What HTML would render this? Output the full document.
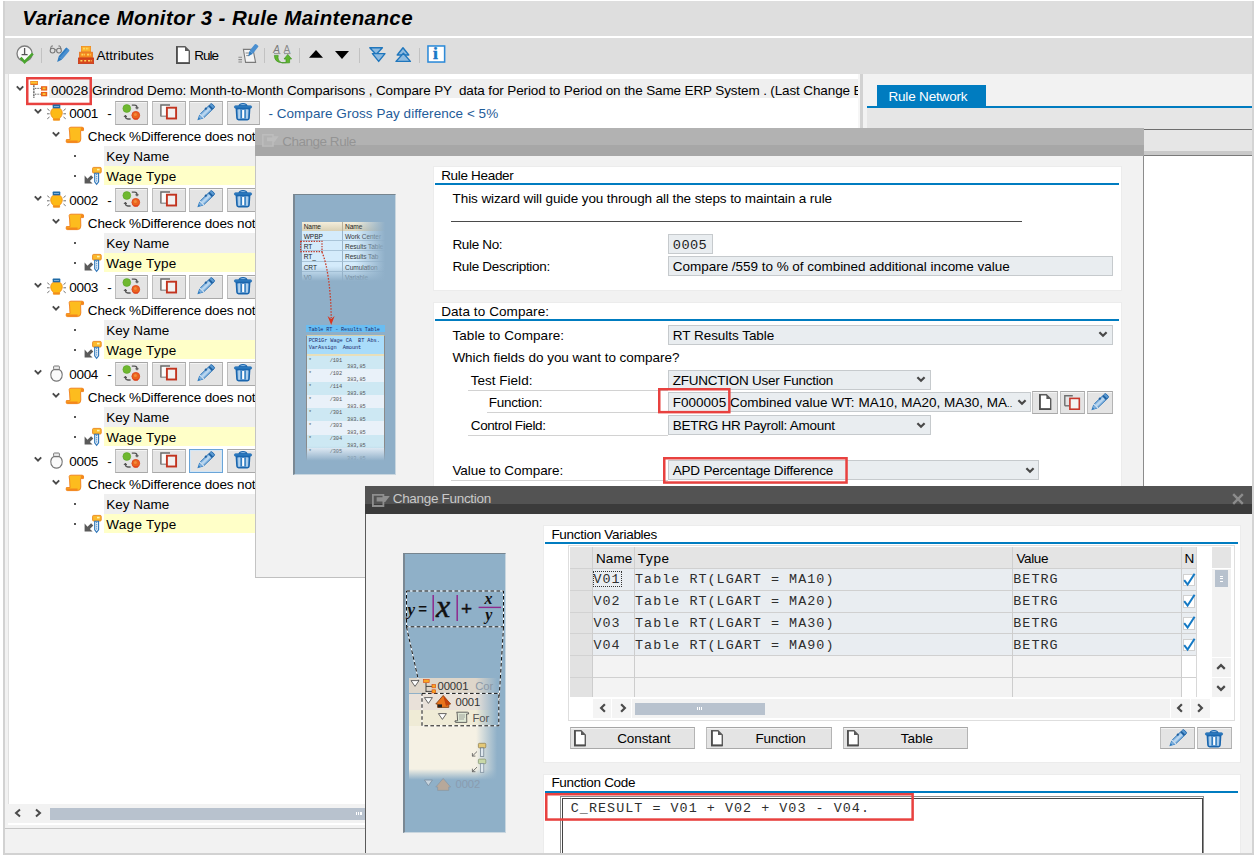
<!DOCTYPE html>
<html lang="en"><head><meta charset="utf-8"><title>Variance Monitor 3 - Rule Maintenance</title>
<style>
html,body{margin:0;padding:0;}
html{width:1256px;height:856px;overflow:hidden;}
body{width:1256px;height:856px;overflow:hidden;background:#fff;position:relative;font-family:"Liberation Sans",sans-serif;font-size:13.5px;letter-spacing:-0.09px;color:#000;}
.b{position:absolute;box-sizing:border-box;display:block;}
.t{position:absolute;white-space:pre;display:block;}
svg{overflow:visible}
</style></head>
<body>
<!-- window frame -->
<div class="b" style="left:2.5px;top:1.0px;width:1251.5px;height:854.0px;background:#f2f2f2;border:2px solid #d2d2d2;border-top:none;"></div>
<div class="b" style="left:4.5px;top:1.0px;width:1247.5px;height:34.5px;background:#dedede;"></div>
<span class="t" style="left:22.3px;top:3px;line-height:29px;font-size:20.5px;font-weight:bold;font-style:italic;letter-spacing:0.42px;">Variance Monitor 3 - Rule Maintenance</span>
<div class="b" style="left:4.5px;top:35.5px;width:1247.5px;height:2.3px;background:#fff;"></div>
<div class="b" style="left:4.5px;top:37.8px;width:1247.5px;height:36.6px;background:#dedede;"></div>
<!-- toolbar icons -->
<svg class="b" style="left:16.0px;top:45.0px;" width="18" height="19" viewBox="0 0 18 19"><circle cx="8.6" cy="8.6" r="7.6" fill="#fafafa" stroke="#7d7d7d" stroke-width="1.3"/><path d="M8.6 3 L8.6 9.6 M5.6 9.6 L11.6 9.6" stroke="#555" stroke-width="1.3" fill="none"/><path d="M4.6 12.6 L8.6 17 L16.8 8.6" fill="none" stroke="#4aa52e" stroke-width="2.6"/></svg>
<div class="b" style="left:41.0px;top:47.5px;width:1.2px;height:15.5px;background:#c2c2c2;"></div>
<svg class="b" style="left:49.0px;top:45.0px;" width="21" height="19" viewBox="0 0 21 19"><circle cx="3.6" cy="5.6" r="2.4" fill="none" stroke="#777" stroke-width="1.1"/><circle cx="10" cy="5.6" r="2.4" fill="none" stroke="#777" stroke-width="1.1"/><path d="M1.4 4 L2.4 1 L4 1 M12.2 4 L11 1 L9.4 1 M6 5 Q6.8 4 7.6 5" fill="none" stroke="#777" stroke-width="1"/><g transform="rotate(40 13 11)"><rect x="10.8" y="1.6" width="4.6" height="12" rx="1.2" fill="#4a8fd0"/><rect x="10.8" y="1.6" width="1.6" height="12" fill="#2f7cc0"/><path d="M10.8 13.6 L15.4 13.6 L13.1 18.6Z" fill="#2f7cc0"/></g></svg>
<svg class="b" style="left:78.0px;top:45.5px;" width="16" height="18" viewBox="0 0 16 18"><rect x="3.4" y="0.4" width="9.2" height="5.4" fill="#fbb02a" stroke="#f08c1c" stroke-width="0.8"/><rect x="1.6" y="6.2" width="12.8" height="5.4" fill="#f68a1e" stroke="#e8701a" stroke-width="0.8"/><rect x="0.4" y="12" width="15.2" height="5.6" fill="#d8481c" stroke="#c63a18" stroke-width="0.8"/><path d="M5 2.6 H11 M3.4 8.6 H7 M9 8.6 H12.6 M2.4 14.8 H4.6 M6.2 14.8 H8.4 M10 14.8 H13.6" stroke="#ffd65c" stroke-width="1.6" stroke-dasharray="2 0.8"/></svg>
<span class="t" style="left:96.6px;top:47px;line-height:17px;letter-spacing:0.008px;">Attributes</span>
<svg class="b" style="left:176.0px;top:45.5px;" width="14" height="18" viewBox="0 0 14 18"><path d="M0.7 0.7 L9 0.7 L13.3 5 L13.3 17.3 L0.7 17.3Z" fill="#fff" stroke="#5c5c5c" stroke-width="1.4"/><path d="M0.9 0.7 L0.9 17.1 L13.3 17.1" fill="none" stroke="#4e4e4e" stroke-width="1.8"/><path d="M9 0.7 L9 5 L13.3 5Z" fill="#5a5a5a"/></svg>
<span class="t" style="left:194.3px;top:47px;line-height:17px;letter-spacing:-1.022px;">Rule</span>
<svg class="b" style="left:238.0px;top:45.0px;" width="19" height="19" viewBox="0 0 19 19"><path d="M5.4 4.4 L15 4.4 L17.6 17.4 L7.6 17.4Z" fill="#f4f4f4" stroke="#7a7a7a" stroke-width="1.1"/><path d="M7.6 8 H12.4 M8.2 10.6 H11.4" stroke="#8a8a8a" stroke-width="1"/><path d="M0.4 12.2 H4 M0.4 14.6 H4 M0.4 17 H4" stroke="#8a8a8a" stroke-width="1.1"/><g transform="rotate(38 14 6)"><rect x="12" y="-2" width="4.4" height="9.6" rx="1.2" fill="#4a8fd0"/><path d="M12 7.6 L16.4 7.6 L14.2 12.4Z" fill="#2f7cc0"/></g></svg>
<div class="b" style="left:264.3px;top:47.5px;width:1.2px;height:15.5px;background:#c2c2c2;"></div>
<svg class="b" style="left:272.5px;top:45.0px;" width="19" height="19" viewBox="0 0 19 19"><text x="0.2" y="8" font-family="Liberation Sans,sans-serif" font-size="10" font-style="italic" fill="#7a7a7a">A</text><text x="10.4" y="8" font-family="Liberation Sans,sans-serif" font-size="10" fill="#8a8a8a">A</text><path d="M1 8.6 H7.4 M11 8.6 H17.6" stroke="#8a8a8a" stroke-width="0.9"/><path d="M1.4 10.4 Q1.6 17.6 9 17.6 L13 17.6 L13 14 L11 14 L14.8 9.4 L18.6 14 L16.6 14 L16.6 17.8 L9 18 Q4 15.6 5.2 10.4Z" fill="#5fb52c" stroke="#3f9422" stroke-width="0.7"/></svg>
<div class="b" style="left:298.8px;top:47.5px;width:1.2px;height:15.5px;background:#c2c2c2;"></div>
<svg class="b" style="left:309.0px;top:50.2px;" width="14" height="8" viewBox="0 0 14 8"><path d="M0 7.8 L7 0 L14 7.8Z" fill="#000"/></svg>
<svg class="b" style="left:334.8px;top:51.2px;" width="14" height="8" viewBox="0 0 14 8"><path d="M0 0 L14 0 L7 8Z" fill="#000"/></svg>
<div class="b" style="left:358.8px;top:47.5px;width:1.2px;height:15.5px;background:#c2c2c2;"></div>
<svg class="b" style="left:368.5px;top:46.6px;" width="17" height="15.4" viewBox="0 0 17 15.4"><path d="M0.8 0.8 L13.4 0.8 L7.1 7.4Z" fill="#8fbbe0" stroke="#1f76bc" stroke-width="1.4" stroke-linejoin="round"/><path d="M3.4 6.6 L16 6.6 L9.7 14.4Z" fill="#8fbbe0" stroke="#1f76bc" stroke-width="1.4" stroke-linejoin="round"/></svg>
<svg class="b" style="left:393.6px;top:46.6px;" width="17" height="15.4" viewBox="0 0 17 15.4"><path d="M3.2 8 L9 0.8 L14.8 8Z" fill="#8fbbe0" stroke="#1f76bc" stroke-width="1.4" stroke-linejoin="round"/><path d="M2 14.4 L9.4 6.2 L16.4 14.4Z" fill="#8fbbe0" stroke="#1f76bc" stroke-width="1.4" stroke-linejoin="round"/></svg>
<div class="b" style="left:418.9px;top:47.5px;width:1.2px;height:15.5px;background:#c2c2c2;"></div>
<svg class="b" style="left:427.0px;top:45.2px;" width="18.6" height="18" viewBox="0 0 18.6 18"><rect x="0.3" y="0.3" width="18" height="17.4" fill="#9ccaf0"/><rect x="1" y="1" width="16.6" height="16" fill="#fff" stroke="#2f8ad6" stroke-width="1.5"/></svg>
<span class="t" style="left:433.1px;top:43px;line-height:20px;font-family:'Liberation Serif',serif;font-size:17.5px;color:#1a78c8;font-weight:bold;-webkit-text-stroke:0.5px #1a78c8;">i</span>
<!-- tree panel -->
<div class="b" style="left:4.5px;top:74.4px;width:854.0px;height:754.0px;background:#f2f2f2;"></div>
<div class="b" style="left:8.0px;top:74.4px;width:850.4px;height:729.6px;background:#fff;border-left:1.6px solid #e0e0e0;"></div>
<div class="b" style="left:858.4px;top:74.4px;width:1.8px;height:754.0px;background:#f6f6f6;"></div>
<div class="b" style="left:860.2px;top:74.4px;width:2.6px;height:754.0px;background:#d2d2d2;"></div>
<svg class="b" style="left:17.6px;top:812.8px" width="1" height="1"><polyline points="2.0,-3.5 -2.0,0 2.0,3.5" fill="none" stroke="#4a4a4a" stroke-width="2" stroke-linejoin="miter"/></svg>
<svg class="b" style="left:38.2px;top:812.8px" width="1" height="1"><polyline points="-2.0,-3.5 2.0,0 -2.0,3.5" fill="none" stroke="#4a4a4a" stroke-width="2" stroke-linejoin="miter"/></svg>
<div class="b" style="left:49.5px;top:807.6px;width:809.0px;height:12.6px;background:#b8c2ce;"></div>
<div class="b" style="left:356.0px;top:812.4px;width:1.2px;height:3.0px;background:#fff;"></div><div class="b" style="left:358.2px;top:812.4px;width:1.2px;height:3.0px;background:#fff;"></div><div class="b" style="left:360.4px;top:812.4px;width:1.2px;height:3.0px;background:#fff;"></div>
<div class="b" style="left:8.0px;top:823.4px;width:850.4px;height:1.2px;background:#fff;"></div>
<div class="b" style="left:4.5px;top:828.0px;width:1247.5px;height:1.2px;background:#c6c6c6;"></div>
<div class="b" style="left:49.2px;top:78.5px;width:809.2px;height:19.2px;background:#efefef;"></div>
<svg class="b" style="left:19.8px;top:87.8px" width="1" height="1"><polyline points="-3.2,-1.65 0,1.65 3.2,-1.65" fill="none" stroke="#4a4a4a" stroke-width="1.9" stroke-linejoin="miter"/></svg>
<svg class="b" style="left:29.6px;top:80.5px;" width="18" height="17" viewBox="0 0 18 17"><rect x="0.3" y="0" width="7.6" height="4" fill="#e8701c"/><rect x="1" y="0.5" width="6.2" height="2.2" fill="#fbc531"/><line x1="3.9" y1="4.2" x2="3.9" y2="17" stroke="#222" stroke-width="1" stroke-dasharray="2.2 0.8"/><line x1="5" y1="7.4" x2="10.8" y2="7.4" stroke="#555" stroke-width="0.9" stroke-dasharray="1.4 1"/><line x1="5" y1="13.2" x2="10.8" y2="13.2" stroke="#555" stroke-width="0.9" stroke-dasharray="1.4 1"/><rect x="11" y="5.2" width="6.2" height="4.4" fill="#e8601c"/><rect x="12.6" y="6.4" width="3" height="1.9" fill="#fbc531"/><rect x="11" y="10.9" width="6.2" height="4.4" fill="#e8601c"/><rect x="12.6" y="12.1" width="3" height="1.9" fill="#fbc531"/></svg>
<span class="t" style="left:51.0px;top:82px;line-height:17px;letter-spacing:-0.085px;">00028</span>
<span class="t" style="left:92.0px;top:82px;line-height:17px;letter-spacing:-0.128px;">Grindrod Demo: Month-to-Month Comparisons , Compare PY  data for Period to Period on the Same ERP System . (Last Change</span>
<div class="b" style="left:853.0px;top:82.0px;width:5.4px;height:14.0px;overflow:hidden;"><span class="t" style="left:0.6px;top:0px;line-height:17px;">B</span></div>
<svg class="b" style="left:26.0px;top:77.4px;" width="66" height="28.2" viewBox="0 0 66 28.2"><rect x="1.25" y="1.25" width="63.5" height="25.7" fill="none" stroke="#e8413f" stroke-width="2.5"/></svg>
<!-- rule 0001 -->
<svg class="b" style="left:37.6px;top:111.2px" width="1" height="1"><polyline points="-3.2,-1.65 0,1.65 3.2,-1.65" fill="none" stroke="#4a4a4a" stroke-width="1.9" stroke-linejoin="miter"/></svg>
<svg class="b" style="left:47.1px;top:105.3px;" width="19" height="16" viewBox="0 0 19 16"><path d="M6.2 3.4 C3 5 2.8 10.4 6.4 13.2 L6.4 15.2 L12.6 15.2 L12.6 13.2 C16.2 10.4 16 5 12.8 3.4Z" fill="#fdba16" stroke="#f0901c" stroke-width="0.9"/><path d="M6.6 13.4 H12.4 V15 H6.6Z" fill="#f28c1a"/><rect x="5.7" y="-0.4" width="7.6" height="3.7" rx="0.6" fill="#1f6aa5"/><rect x="6.9" y="1" width="5.2" height="1" fill="#79acdb"/><g stroke="#6e6e6e" stroke-width="1"><line x1="0.3" y1="3.8" x2="2.5" y2="5.6"/><line x1="0" y1="8.8" x2="2.6" y2="8.8"/><line x1="0.3" y1="13.8" x2="2.5" y2="12"/><line x1="18.7" y1="3.8" x2="16.5" y2="5.6"/><line x1="19" y1="8.8" x2="16.4" y2="8.8"/><line x1="18.7" y1="13.8" x2="16.5" y2="12"/></g></svg>
<span class="t" style="left:69.3px;top:105px;line-height:17px;letter-spacing:-0.344px;">0001</span>
<span class="t" style="left:107.2px;top:105px;line-height:17px;">-</span>
<div class="b" style="left:115.1px;top:101.0px;width:33.4px;height:24.0px;background:#e4e4e4;border:1px solid;border-color:#a6a6a6 #b4b4b4 #a9a9a9 #bdbdbd;box-shadow:inset 0 1px 0 #f4f4f4;"></div>
<div class="b" style="left:152.3px;top:101.0px;width:33.4px;height:24.0px;background:#e4e4e4;border:1px solid;border-color:#a6a6a6 #b4b4b4 #a9a9a9 #bdbdbd;box-shadow:inset 0 1px 0 #f4f4f4;"></div>
<div class="b" style="left:189.3px;top:101.0px;width:33.4px;height:24.0px;background:#e4e4e4;border:1px solid;border-color:#a6a6a6 #b4b4b4 #a9a9a9 #bdbdbd;box-shadow:inset 0 1px 0 #f4f4f4;"></div>
<div class="b" style="left:226.7px;top:101.0px;width:33.4px;height:24.0px;background:#e4e4e4;border:1px solid;border-color:#a6a6a6 #b4b4b4 #a9a9a9 #bdbdbd;box-shadow:inset 0 1px 0 #f4f4f4;"></div>
<svg class="b" style="left:122.5px;top:104.1px;" width="18" height="17" viewBox="0 0 18 17"><circle cx="3.8" cy="4.5" r="3.9" fill="#6fb82f" stroke="#57a326" stroke-width="0.6"/><circle cx="12.8" cy="11.3" r="3.9" fill="#ea641e" stroke="#dc3f1c" stroke-width="0.8"/><circle cx="12.4" cy="10.6" r="1.5" fill="#f28a3a"/><path d="M10.6 14.4 H15 V15.6 H10.6Z" fill="#dc3f1c"/><path d="M8.8 1.2 L11.6 1.2 Q14 1.2 14 3.6 L14 5.2" fill="none" stroke="#555" stroke-width="1.3"/><path d="M12.4 3.8 H15.6" stroke="#555" stroke-width="1.1"/><path d="M7.6 15 L4.8 15 Q2.4 15 2.4 12.6 L2.4 11" fill="none" stroke="#555" stroke-width="1.3"/><path d="M0.8 12.4 H4" stroke="#555" stroke-width="1.1"/></svg>
<svg class="b" style="left:159.6px;top:104.2px;" width="18" height="17" viewBox="0 0 18 17"><rect x="0.9" y="1.2" width="9" height="11" fill="#fbfbfb"/><path d="M0.9 12.6 L0.9 1 L10 1" fill="none" stroke="#6a6a6a" stroke-width="1.4"/><path d="M0.9 12.2 L6 12.2" stroke="#8a8a8a" stroke-width="1.2"/><rect x="6.9" y="3.7" width="9.2" height="10.8" fill="#f1f1f1" stroke="#c2341f" stroke-width="1.9"/></svg>
<svg class="b" style="left:197.0px;top:103.6px;" width="17.0" height="17.0" viewBox="0 0 17 17"><g transform="rotate(46 8.5 8.5)"><path d="M5.9 -0.8 Q5.9 -2.2 7.1 -2.2 L9.9 -2.2 Q11.1 -2.2 11.1 -0.8 L11.1 0.6 L5.9 0.6Z" fill="#5b9ad2" stroke="#2368ab" stroke-width="0.9"/><rect x="5.6" y="0.6" width="5.8" height="1.5" fill="#1d5e9e"/><rect x="5.9" y="2.1" width="5.2" height="11.4" fill="#8dbae3" stroke="#2a72b5" stroke-width="0.9"/><rect x="7.4" y="2.4" width="2.2" height="10.8" fill="#b9d6ef"/><circle cx="5.9" cy="5.6" r="1.1" fill="#1d5e9e"/><rect x="5.6" y="13.2" width="5.8" height="1.1" fill="#e6f0fa"/><path d="M5.6 14.3 L11.4 14.3 L8.5 19.8Z" fill="#2f7cc0"/><path d="M6.6 14.6 L10.4 14.6 L9.6 16.6 L7.4 16.6Z" fill="#7fb0de"/></g></svg>
<svg class="b" style="left:233.8px;top:103.4px;" width="18" height="17" viewBox="0 0 18 17"><path d="M5 2.8 Q5.6 0.5 9 0.5 Q12.4 0.5 13 2.8Z" fill="#8dbae3" stroke="#1a66ae" stroke-width="1.1"/><rect x="0.4" y="2.7" width="17.2" height="2.5" rx="1" fill="#2f7cc0" stroke="#1a66ae" stroke-width="0.6"/><path d="M2.4 5.6 L15.6 5.6 L15 15.2 Q14.9 16.6 13.4 16.6 L4.6 16.6 Q3.1 16.6 3 15.2Z" fill="#86b5e0" stroke="#1a66ae" stroke-width="1.6"/><rect x="4.4" y="6.4" width="1.5" height="9.2" fill="#b9d6ef"/><rect x="12.2" y="6.4" width="1.5" height="9.2" fill="#b9d6ef"/><rect x="6.6" y="7" width="1.6" height="8.4" fill="#2f7cc0"/><rect x="10.2" y="7" width="1.6" height="8.4" fill="#2f7cc0"/><rect x="8.2" y="7" width="2" height="8" fill="#fff"/></svg>
<span class="t" style="left:268.4px;top:105px;line-height:17px;color:#1f5c99;letter-spacing:0.046px;">- Compare Gross Pay difference &lt; 5%</span>
<svg class="b" style="left:55.8px;top:134.4px" width="1" height="1"><polyline points="-3.2,-1.65 0,1.65 3.2,-1.65" fill="none" stroke="#4a4a4a" stroke-width="1.9" stroke-linejoin="miter"/></svg>
<svg class="b" style="left:66.2px;top:127.2px;" width="18" height="16" viewBox="0 0 18 16"><path d="M3.2 1.4 Q3.2 0.2 5 0.2 L16 0.2 Q17.8 0.2 17.6 2 L17.4 3.6 L14.6 3.6 L14.8 12 Q14.9 15.6 11.4 15.6 L1.4 15.6 Q0 15.6 0.2 14.2 L0.4 12.6 L4 12.6 L3.6 5 Q3.2 2.6 3.2 1.4Z" fill="#fdbc1e" stroke="#ef7d1a" stroke-width="0.9"/><path d="M0.4 13.4 L11.6 13.4 L11.6 15.4 L1.4 15.4 Q0.2 15.4 0.4 13.4Z" fill="#f4871c"/><path d="M14.8 0.6 Q17.4 0.4 17.2 2.2 L17 3.3 L14.9 3.3Z" fill="#f4871c"/></svg>
<span class="t" style="left:87.8px;top:128px;line-height:17px;letter-spacing:-0.122px;">Check %Difference does not</span>
<div class="b" style="left:73.8px;top:155.2px;width:2.0px;height:2.0px;background:#555;"></div>
<div class="b" style="left:104.0px;top:146.1px;width:754.4px;height:20.0px;background:#efefef;"></div>
<span class="t" style="left:106.2px;top:148px;line-height:17px;letter-spacing:-0.004px;">Key Name</span>
<div class="b" style="left:73.8px;top:174.9px;width:2.0px;height:2.0px;background:#555;"></div>
<div class="b" style="left:104.0px;top:166.1px;width:754.4px;height:19.3px;background:#ffffc8;"></div>
<svg class="b" style="left:83.6px;top:166.6px;" width="18" height="18" viewBox="0 0 18 18"><path d="M0.6 8.6 L0.6 16.6 L8.6 16.6 L5.9 13.9 L9.3 10.5 L7.1 8.3 L3.5 11.7Z" fill="#5a5a5a"/><rect x="8.6" y="0.4" width="8.6" height="5.6" rx="1" fill="#fbb92c" stroke="#e8861c" stroke-width="0.9"/><rect x="13" y="1.8" width="2.6" height="1.6" fill="#fff3b0"/><path d="M10.7 6.2 L14.6 6.2 L14.6 14.8 L12.6 17.4 L10.7 14.8Z" fill="#eaf3fb" stroke="#2c74b8" stroke-width="1.1"/><line x1="12.7" y1="7" x2="12.7" y2="15" stroke="#2c74b8" stroke-width="0.9" stroke-dasharray="1.2 0.9"/></svg>
<span class="t" style="left:106.2px;top:168px;line-height:17px;letter-spacing:0.320px;">Wage Type</span>
<!-- rule 0002 -->
<svg class="b" style="left:37.6px;top:198.2px" width="1" height="1"><polyline points="-3.2,-1.65 0,1.65 3.2,-1.65" fill="none" stroke="#4a4a4a" stroke-width="1.9" stroke-linejoin="miter"/></svg>
<svg class="b" style="left:47.1px;top:192.3px;" width="19" height="16" viewBox="0 0 19 16"><path d="M6.2 3.4 C3 5 2.8 10.4 6.4 13.2 L6.4 15.2 L12.6 15.2 L12.6 13.2 C16.2 10.4 16 5 12.8 3.4Z" fill="#fdba16" stroke="#f0901c" stroke-width="0.9"/><path d="M6.6 13.4 H12.4 V15 H6.6Z" fill="#f28c1a"/><rect x="5.7" y="-0.4" width="7.6" height="3.7" rx="0.6" fill="#1f6aa5"/><rect x="6.9" y="1" width="5.2" height="1" fill="#79acdb"/><g stroke="#6e6e6e" stroke-width="1"><line x1="0.3" y1="3.8" x2="2.5" y2="5.6"/><line x1="0" y1="8.8" x2="2.6" y2="8.8"/><line x1="0.3" y1="13.8" x2="2.5" y2="12"/><line x1="18.7" y1="3.8" x2="16.5" y2="5.6"/><line x1="19" y1="8.8" x2="16.4" y2="8.8"/><line x1="18.7" y1="13.8" x2="16.5" y2="12"/></g></svg>
<span class="t" style="left:69.3px;top:192px;line-height:17px;letter-spacing:-0.344px;">0002</span>
<span class="t" style="left:107.2px;top:192px;line-height:17px;">-</span>
<div class="b" style="left:115.1px;top:188.0px;width:33.4px;height:24.0px;background:#e4e4e4;border:1px solid;border-color:#a6a6a6 #b4b4b4 #a9a9a9 #bdbdbd;box-shadow:inset 0 1px 0 #f4f4f4;"></div>
<div class="b" style="left:152.3px;top:188.0px;width:33.4px;height:24.0px;background:#e4e4e4;border:1px solid;border-color:#a6a6a6 #b4b4b4 #a9a9a9 #bdbdbd;box-shadow:inset 0 1px 0 #f4f4f4;"></div>
<div class="b" style="left:189.3px;top:188.0px;width:33.4px;height:24.0px;background:#e4e4e4;border:1px solid;border-color:#a6a6a6 #b4b4b4 #a9a9a9 #bdbdbd;box-shadow:inset 0 1px 0 #f4f4f4;"></div>
<div class="b" style="left:226.7px;top:188.0px;width:33.4px;height:24.0px;background:#e4e4e4;border:1px solid;border-color:#a6a6a6 #b4b4b4 #a9a9a9 #bdbdbd;box-shadow:inset 0 1px 0 #f4f4f4;"></div>
<svg class="b" style="left:122.5px;top:191.1px;" width="18" height="17" viewBox="0 0 18 17"><circle cx="3.8" cy="4.5" r="3.9" fill="#6fb82f" stroke="#57a326" stroke-width="0.6"/><circle cx="12.8" cy="11.3" r="3.9" fill="#ea641e" stroke="#dc3f1c" stroke-width="0.8"/><circle cx="12.4" cy="10.6" r="1.5" fill="#f28a3a"/><path d="M10.6 14.4 H15 V15.6 H10.6Z" fill="#dc3f1c"/><path d="M8.8 1.2 L11.6 1.2 Q14 1.2 14 3.6 L14 5.2" fill="none" stroke="#555" stroke-width="1.3"/><path d="M12.4 3.8 H15.6" stroke="#555" stroke-width="1.1"/><path d="M7.6 15 L4.8 15 Q2.4 15 2.4 12.6 L2.4 11" fill="none" stroke="#555" stroke-width="1.3"/><path d="M0.8 12.4 H4" stroke="#555" stroke-width="1.1"/></svg>
<svg class="b" style="left:159.6px;top:191.2px;" width="18" height="17" viewBox="0 0 18 17"><rect x="0.9" y="1.2" width="9" height="11" fill="#fbfbfb"/><path d="M0.9 12.6 L0.9 1 L10 1" fill="none" stroke="#6a6a6a" stroke-width="1.4"/><path d="M0.9 12.2 L6 12.2" stroke="#8a8a8a" stroke-width="1.2"/><rect x="6.9" y="3.7" width="9.2" height="10.8" fill="#f1f1f1" stroke="#c2341f" stroke-width="1.9"/></svg>
<svg class="b" style="left:197.0px;top:190.6px;" width="17.0" height="17.0" viewBox="0 0 17 17"><g transform="rotate(46 8.5 8.5)"><path d="M5.9 -0.8 Q5.9 -2.2 7.1 -2.2 L9.9 -2.2 Q11.1 -2.2 11.1 -0.8 L11.1 0.6 L5.9 0.6Z" fill="#5b9ad2" stroke="#2368ab" stroke-width="0.9"/><rect x="5.6" y="0.6" width="5.8" height="1.5" fill="#1d5e9e"/><rect x="5.9" y="2.1" width="5.2" height="11.4" fill="#8dbae3" stroke="#2a72b5" stroke-width="0.9"/><rect x="7.4" y="2.4" width="2.2" height="10.8" fill="#b9d6ef"/><circle cx="5.9" cy="5.6" r="1.1" fill="#1d5e9e"/><rect x="5.6" y="13.2" width="5.8" height="1.1" fill="#e6f0fa"/><path d="M5.6 14.3 L11.4 14.3 L8.5 19.8Z" fill="#2f7cc0"/><path d="M6.6 14.6 L10.4 14.6 L9.6 16.6 L7.4 16.6Z" fill="#7fb0de"/></g></svg>
<svg class="b" style="left:233.8px;top:190.4px;" width="18" height="17" viewBox="0 0 18 17"><path d="M5 2.8 Q5.6 0.5 9 0.5 Q12.4 0.5 13 2.8Z" fill="#8dbae3" stroke="#1a66ae" stroke-width="1.1"/><rect x="0.4" y="2.7" width="17.2" height="2.5" rx="1" fill="#2f7cc0" stroke="#1a66ae" stroke-width="0.6"/><path d="M2.4 5.6 L15.6 5.6 L15 15.2 Q14.9 16.6 13.4 16.6 L4.6 16.6 Q3.1 16.6 3 15.2Z" fill="#86b5e0" stroke="#1a66ae" stroke-width="1.6"/><rect x="4.4" y="6.4" width="1.5" height="9.2" fill="#b9d6ef"/><rect x="12.2" y="6.4" width="1.5" height="9.2" fill="#b9d6ef"/><rect x="6.6" y="7" width="1.6" height="8.4" fill="#2f7cc0"/><rect x="10.2" y="7" width="1.6" height="8.4" fill="#2f7cc0"/><rect x="8.2" y="7" width="2" height="8" fill="#fff"/></svg>
<svg class="b" style="left:55.8px;top:221.4px" width="1" height="1"><polyline points="-3.2,-1.65 0,1.65 3.2,-1.65" fill="none" stroke="#4a4a4a" stroke-width="1.9" stroke-linejoin="miter"/></svg>
<svg class="b" style="left:66.2px;top:214.2px;" width="18" height="16" viewBox="0 0 18 16"><path d="M3.2 1.4 Q3.2 0.2 5 0.2 L16 0.2 Q17.8 0.2 17.6 2 L17.4 3.6 L14.6 3.6 L14.8 12 Q14.9 15.6 11.4 15.6 L1.4 15.6 Q0 15.6 0.2 14.2 L0.4 12.6 L4 12.6 L3.6 5 Q3.2 2.6 3.2 1.4Z" fill="#fdbc1e" stroke="#ef7d1a" stroke-width="0.9"/><path d="M0.4 13.4 L11.6 13.4 L11.6 15.4 L1.4 15.4 Q0.2 15.4 0.4 13.4Z" fill="#f4871c"/><path d="M14.8 0.6 Q17.4 0.4 17.2 2.2 L17 3.3 L14.9 3.3Z" fill="#f4871c"/></svg>
<span class="t" style="left:87.8px;top:215px;line-height:17px;letter-spacing:-0.122px;">Check %Difference does not</span>
<div class="b" style="left:73.8px;top:242.2px;width:2.0px;height:2.0px;background:#555;"></div>
<div class="b" style="left:104.0px;top:233.1px;width:754.4px;height:20.0px;background:#efefef;"></div>
<span class="t" style="left:106.2px;top:235px;line-height:17px;letter-spacing:-0.004px;">Key Name</span>
<div class="b" style="left:73.8px;top:261.9px;width:2.0px;height:2.0px;background:#555;"></div>
<div class="b" style="left:104.0px;top:253.1px;width:754.4px;height:19.3px;background:#ffffc8;"></div>
<svg class="b" style="left:83.6px;top:253.6px;" width="18" height="18" viewBox="0 0 18 18"><path d="M0.6 8.6 L0.6 16.6 L8.6 16.6 L5.9 13.9 L9.3 10.5 L7.1 8.3 L3.5 11.7Z" fill="#5a5a5a"/><rect x="8.6" y="0.4" width="8.6" height="5.6" rx="1" fill="#fbb92c" stroke="#e8861c" stroke-width="0.9"/><rect x="13" y="1.8" width="2.6" height="1.6" fill="#fff3b0"/><path d="M10.7 6.2 L14.6 6.2 L14.6 14.8 L12.6 17.4 L10.7 14.8Z" fill="#eaf3fb" stroke="#2c74b8" stroke-width="1.1"/><line x1="12.7" y1="7" x2="12.7" y2="15" stroke="#2c74b8" stroke-width="0.9" stroke-dasharray="1.2 0.9"/></svg>
<span class="t" style="left:106.2px;top:255px;line-height:17px;letter-spacing:0.320px;">Wage Type</span>
<!-- rule 0003 -->
<svg class="b" style="left:37.6px;top:285.2px" width="1" height="1"><polyline points="-3.2,-1.65 0,1.65 3.2,-1.65" fill="none" stroke="#4a4a4a" stroke-width="1.9" stroke-linejoin="miter"/></svg>
<svg class="b" style="left:47.1px;top:279.3px;" width="19" height="16" viewBox="0 0 19 16"><path d="M6.2 3.4 C3 5 2.8 10.4 6.4 13.2 L6.4 15.2 L12.6 15.2 L12.6 13.2 C16.2 10.4 16 5 12.8 3.4Z" fill="#fdba16" stroke="#f0901c" stroke-width="0.9"/><path d="M6.6 13.4 H12.4 V15 H6.6Z" fill="#f28c1a"/><rect x="5.7" y="-0.4" width="7.6" height="3.7" rx="0.6" fill="#1f6aa5"/><rect x="6.9" y="1" width="5.2" height="1" fill="#79acdb"/><g stroke="#6e6e6e" stroke-width="1"><line x1="0.3" y1="3.8" x2="2.5" y2="5.6"/><line x1="0" y1="8.8" x2="2.6" y2="8.8"/><line x1="0.3" y1="13.8" x2="2.5" y2="12"/><line x1="18.7" y1="3.8" x2="16.5" y2="5.6"/><line x1="19" y1="8.8" x2="16.4" y2="8.8"/><line x1="18.7" y1="13.8" x2="16.5" y2="12"/></g></svg>
<span class="t" style="left:69.3px;top:279px;line-height:17px;letter-spacing:-0.344px;">0003</span>
<span class="t" style="left:107.2px;top:279px;line-height:17px;">-</span>
<div class="b" style="left:115.1px;top:275.0px;width:33.4px;height:24.0px;background:#e4e4e4;border:1px solid;border-color:#a6a6a6 #b4b4b4 #a9a9a9 #bdbdbd;box-shadow:inset 0 1px 0 #f4f4f4;"></div>
<div class="b" style="left:152.3px;top:275.0px;width:33.4px;height:24.0px;background:#e4e4e4;border:1px solid;border-color:#a6a6a6 #b4b4b4 #a9a9a9 #bdbdbd;box-shadow:inset 0 1px 0 #f4f4f4;"></div>
<div class="b" style="left:189.3px;top:275.0px;width:33.4px;height:24.0px;background:#e4e4e4;border:1px solid;border-color:#a6a6a6 #b4b4b4 #a9a9a9 #bdbdbd;box-shadow:inset 0 1px 0 #f4f4f4;"></div>
<div class="b" style="left:226.7px;top:275.0px;width:33.4px;height:24.0px;background:#e4e4e4;border:1px solid;border-color:#a6a6a6 #b4b4b4 #a9a9a9 #bdbdbd;box-shadow:inset 0 1px 0 #f4f4f4;"></div>
<svg class="b" style="left:122.5px;top:278.1px;" width="18" height="17" viewBox="0 0 18 17"><circle cx="3.8" cy="4.5" r="3.9" fill="#6fb82f" stroke="#57a326" stroke-width="0.6"/><circle cx="12.8" cy="11.3" r="3.9" fill="#ea641e" stroke="#dc3f1c" stroke-width="0.8"/><circle cx="12.4" cy="10.6" r="1.5" fill="#f28a3a"/><path d="M10.6 14.4 H15 V15.6 H10.6Z" fill="#dc3f1c"/><path d="M8.8 1.2 L11.6 1.2 Q14 1.2 14 3.6 L14 5.2" fill="none" stroke="#555" stroke-width="1.3"/><path d="M12.4 3.8 H15.6" stroke="#555" stroke-width="1.1"/><path d="M7.6 15 L4.8 15 Q2.4 15 2.4 12.6 L2.4 11" fill="none" stroke="#555" stroke-width="1.3"/><path d="M0.8 12.4 H4" stroke="#555" stroke-width="1.1"/></svg>
<svg class="b" style="left:159.6px;top:278.2px;" width="18" height="17" viewBox="0 0 18 17"><rect x="0.9" y="1.2" width="9" height="11" fill="#fbfbfb"/><path d="M0.9 12.6 L0.9 1 L10 1" fill="none" stroke="#6a6a6a" stroke-width="1.4"/><path d="M0.9 12.2 L6 12.2" stroke="#8a8a8a" stroke-width="1.2"/><rect x="6.9" y="3.7" width="9.2" height="10.8" fill="#f1f1f1" stroke="#c2341f" stroke-width="1.9"/></svg>
<svg class="b" style="left:197.0px;top:277.6px;" width="17.0" height="17.0" viewBox="0 0 17 17"><g transform="rotate(46 8.5 8.5)"><path d="M5.9 -0.8 Q5.9 -2.2 7.1 -2.2 L9.9 -2.2 Q11.1 -2.2 11.1 -0.8 L11.1 0.6 L5.9 0.6Z" fill="#5b9ad2" stroke="#2368ab" stroke-width="0.9"/><rect x="5.6" y="0.6" width="5.8" height="1.5" fill="#1d5e9e"/><rect x="5.9" y="2.1" width="5.2" height="11.4" fill="#8dbae3" stroke="#2a72b5" stroke-width="0.9"/><rect x="7.4" y="2.4" width="2.2" height="10.8" fill="#b9d6ef"/><circle cx="5.9" cy="5.6" r="1.1" fill="#1d5e9e"/><rect x="5.6" y="13.2" width="5.8" height="1.1" fill="#e6f0fa"/><path d="M5.6 14.3 L11.4 14.3 L8.5 19.8Z" fill="#2f7cc0"/><path d="M6.6 14.6 L10.4 14.6 L9.6 16.6 L7.4 16.6Z" fill="#7fb0de"/></g></svg>
<svg class="b" style="left:233.8px;top:277.4px;" width="18" height="17" viewBox="0 0 18 17"><path d="M5 2.8 Q5.6 0.5 9 0.5 Q12.4 0.5 13 2.8Z" fill="#8dbae3" stroke="#1a66ae" stroke-width="1.1"/><rect x="0.4" y="2.7" width="17.2" height="2.5" rx="1" fill="#2f7cc0" stroke="#1a66ae" stroke-width="0.6"/><path d="M2.4 5.6 L15.6 5.6 L15 15.2 Q14.9 16.6 13.4 16.6 L4.6 16.6 Q3.1 16.6 3 15.2Z" fill="#86b5e0" stroke="#1a66ae" stroke-width="1.6"/><rect x="4.4" y="6.4" width="1.5" height="9.2" fill="#b9d6ef"/><rect x="12.2" y="6.4" width="1.5" height="9.2" fill="#b9d6ef"/><rect x="6.6" y="7" width="1.6" height="8.4" fill="#2f7cc0"/><rect x="10.2" y="7" width="1.6" height="8.4" fill="#2f7cc0"/><rect x="8.2" y="7" width="2" height="8" fill="#fff"/></svg>
<svg class="b" style="left:55.8px;top:308.4px" width="1" height="1"><polyline points="-3.2,-1.65 0,1.65 3.2,-1.65" fill="none" stroke="#4a4a4a" stroke-width="1.9" stroke-linejoin="miter"/></svg>
<svg class="b" style="left:66.2px;top:301.2px;" width="18" height="16" viewBox="0 0 18 16"><path d="M3.2 1.4 Q3.2 0.2 5 0.2 L16 0.2 Q17.8 0.2 17.6 2 L17.4 3.6 L14.6 3.6 L14.8 12 Q14.9 15.6 11.4 15.6 L1.4 15.6 Q0 15.6 0.2 14.2 L0.4 12.6 L4 12.6 L3.6 5 Q3.2 2.6 3.2 1.4Z" fill="#fdbc1e" stroke="#ef7d1a" stroke-width="0.9"/><path d="M0.4 13.4 L11.6 13.4 L11.6 15.4 L1.4 15.4 Q0.2 15.4 0.4 13.4Z" fill="#f4871c"/><path d="M14.8 0.6 Q17.4 0.4 17.2 2.2 L17 3.3 L14.9 3.3Z" fill="#f4871c"/></svg>
<span class="t" style="left:87.8px;top:302px;line-height:17px;letter-spacing:-0.122px;">Check %Difference does not</span>
<div class="b" style="left:73.8px;top:329.2px;width:2.0px;height:2.0px;background:#555;"></div>
<div class="b" style="left:104.0px;top:320.1px;width:754.4px;height:20.0px;background:#efefef;"></div>
<span class="t" style="left:106.2px;top:322px;line-height:17px;letter-spacing:-0.004px;">Key Name</span>
<div class="b" style="left:73.8px;top:348.9px;width:2.0px;height:2.0px;background:#555;"></div>
<div class="b" style="left:104.0px;top:340.1px;width:754.4px;height:19.3px;background:#ffffc8;"></div>
<svg class="b" style="left:83.6px;top:340.6px;" width="18" height="18" viewBox="0 0 18 18"><path d="M0.6 8.6 L0.6 16.6 L8.6 16.6 L5.9 13.9 L9.3 10.5 L7.1 8.3 L3.5 11.7Z" fill="#5a5a5a"/><rect x="8.6" y="0.4" width="8.6" height="5.6" rx="1" fill="#fbb92c" stroke="#e8861c" stroke-width="0.9"/><rect x="13" y="1.8" width="2.6" height="1.6" fill="#fff3b0"/><path d="M10.7 6.2 L14.6 6.2 L14.6 14.8 L12.6 17.4 L10.7 14.8Z" fill="#eaf3fb" stroke="#2c74b8" stroke-width="1.1"/><line x1="12.7" y1="7" x2="12.7" y2="15" stroke="#2c74b8" stroke-width="0.9" stroke-dasharray="1.2 0.9"/></svg>
<span class="t" style="left:106.2px;top:342px;line-height:17px;letter-spacing:0.320px;">Wage Type</span>
<!-- rule 0004 -->
<svg class="b" style="left:37.6px;top:372.2px" width="1" height="1"><polyline points="-3.2,-1.65 0,1.65 3.2,-1.65" fill="none" stroke="#4a4a4a" stroke-width="1.9" stroke-linejoin="miter"/></svg>
<svg class="b" style="left:47.1px;top:366.3px;" width="19" height="16" viewBox="0 0 19 16"><rect x="6.6" y="0" width="5.8" height="3.4" rx="0.8" fill="#ececec" stroke="#777" stroke-width="1"/><path d="M6.8 3.6 C3 5.4 2.8 11.4 6 14 Q9.5 16.2 13 14 C16.2 11.4 16 5.4 12.2 3.6Z" fill="#fafafa" stroke="#777" stroke-width="1.1"/></svg>
<span class="t" style="left:69.3px;top:366px;line-height:17px;letter-spacing:-0.344px;">0004</span>
<span class="t" style="left:107.2px;top:366px;line-height:17px;">-</span>
<div class="b" style="left:115.1px;top:362.0px;width:33.4px;height:24.0px;background:#e4e4e4;border:1px solid;border-color:#a6a6a6 #b4b4b4 #a9a9a9 #bdbdbd;box-shadow:inset 0 1px 0 #f4f4f4;"></div>
<div class="b" style="left:152.3px;top:362.0px;width:33.4px;height:24.0px;background:#e4e4e4;border:1px solid;border-color:#a6a6a6 #b4b4b4 #a9a9a9 #bdbdbd;box-shadow:inset 0 1px 0 #f4f4f4;"></div>
<div class="b" style="left:189.3px;top:362.0px;width:33.4px;height:24.0px;background:#e4e4e4;border:1px solid;border-color:#a6a6a6 #b4b4b4 #a9a9a9 #bdbdbd;box-shadow:inset 0 1px 0 #f4f4f4;"></div>
<div class="b" style="left:226.7px;top:362.0px;width:33.4px;height:24.0px;background:#e4e4e4;border:1px solid;border-color:#a6a6a6 #b4b4b4 #a9a9a9 #bdbdbd;box-shadow:inset 0 1px 0 #f4f4f4;"></div>
<svg class="b" style="left:122.5px;top:365.1px;" width="18" height="17" viewBox="0 0 18 17"><circle cx="3.8" cy="4.5" r="3.9" fill="#6fb82f" stroke="#57a326" stroke-width="0.6"/><circle cx="12.8" cy="11.3" r="3.9" fill="#ea641e" stroke="#dc3f1c" stroke-width="0.8"/><circle cx="12.4" cy="10.6" r="1.5" fill="#f28a3a"/><path d="M10.6 14.4 H15 V15.6 H10.6Z" fill="#dc3f1c"/><path d="M8.8 1.2 L11.6 1.2 Q14 1.2 14 3.6 L14 5.2" fill="none" stroke="#555" stroke-width="1.3"/><path d="M12.4 3.8 H15.6" stroke="#555" stroke-width="1.1"/><path d="M7.6 15 L4.8 15 Q2.4 15 2.4 12.6 L2.4 11" fill="none" stroke="#555" stroke-width="1.3"/><path d="M0.8 12.4 H4" stroke="#555" stroke-width="1.1"/></svg>
<svg class="b" style="left:159.6px;top:365.2px;" width="18" height="17" viewBox="0 0 18 17"><rect x="0.9" y="1.2" width="9" height="11" fill="#fbfbfb"/><path d="M0.9 12.6 L0.9 1 L10 1" fill="none" stroke="#6a6a6a" stroke-width="1.4"/><path d="M0.9 12.2 L6 12.2" stroke="#8a8a8a" stroke-width="1.2"/><rect x="6.9" y="3.7" width="9.2" height="10.8" fill="#f1f1f1" stroke="#c2341f" stroke-width="1.9"/></svg>
<svg class="b" style="left:197.0px;top:364.6px;" width="17.0" height="17.0" viewBox="0 0 17 17"><g transform="rotate(46 8.5 8.5)"><path d="M5.9 -0.8 Q5.9 -2.2 7.1 -2.2 L9.9 -2.2 Q11.1 -2.2 11.1 -0.8 L11.1 0.6 L5.9 0.6Z" fill="#5b9ad2" stroke="#2368ab" stroke-width="0.9"/><rect x="5.6" y="0.6" width="5.8" height="1.5" fill="#1d5e9e"/><rect x="5.9" y="2.1" width="5.2" height="11.4" fill="#8dbae3" stroke="#2a72b5" stroke-width="0.9"/><rect x="7.4" y="2.4" width="2.2" height="10.8" fill="#b9d6ef"/><circle cx="5.9" cy="5.6" r="1.1" fill="#1d5e9e"/><rect x="5.6" y="13.2" width="5.8" height="1.1" fill="#e6f0fa"/><path d="M5.6 14.3 L11.4 14.3 L8.5 19.8Z" fill="#2f7cc0"/><path d="M6.6 14.6 L10.4 14.6 L9.6 16.6 L7.4 16.6Z" fill="#7fb0de"/></g></svg>
<svg class="b" style="left:233.8px;top:364.4px;" width="18" height="17" viewBox="0 0 18 17"><path d="M5 2.8 Q5.6 0.5 9 0.5 Q12.4 0.5 13 2.8Z" fill="#8dbae3" stroke="#1a66ae" stroke-width="1.1"/><rect x="0.4" y="2.7" width="17.2" height="2.5" rx="1" fill="#2f7cc0" stroke="#1a66ae" stroke-width="0.6"/><path d="M2.4 5.6 L15.6 5.6 L15 15.2 Q14.9 16.6 13.4 16.6 L4.6 16.6 Q3.1 16.6 3 15.2Z" fill="#86b5e0" stroke="#1a66ae" stroke-width="1.6"/><rect x="4.4" y="6.4" width="1.5" height="9.2" fill="#b9d6ef"/><rect x="12.2" y="6.4" width="1.5" height="9.2" fill="#b9d6ef"/><rect x="6.6" y="7" width="1.6" height="8.4" fill="#2f7cc0"/><rect x="10.2" y="7" width="1.6" height="8.4" fill="#2f7cc0"/><rect x="8.2" y="7" width="2" height="8" fill="#fff"/></svg>
<svg class="b" style="left:55.8px;top:395.4px" width="1" height="1"><polyline points="-3.2,-1.65 0,1.65 3.2,-1.65" fill="none" stroke="#4a4a4a" stroke-width="1.9" stroke-linejoin="miter"/></svg>
<svg class="b" style="left:66.2px;top:388.2px;" width="18" height="16" viewBox="0 0 18 16"><path d="M3.2 1.4 Q3.2 0.2 5 0.2 L16 0.2 Q17.8 0.2 17.6 2 L17.4 3.6 L14.6 3.6 L14.8 12 Q14.9 15.6 11.4 15.6 L1.4 15.6 Q0 15.6 0.2 14.2 L0.4 12.6 L4 12.6 L3.6 5 Q3.2 2.6 3.2 1.4Z" fill="#fdbc1e" stroke="#ef7d1a" stroke-width="0.9"/><path d="M0.4 13.4 L11.6 13.4 L11.6 15.4 L1.4 15.4 Q0.2 15.4 0.4 13.4Z" fill="#f4871c"/><path d="M14.8 0.6 Q17.4 0.4 17.2 2.2 L17 3.3 L14.9 3.3Z" fill="#f4871c"/></svg>
<span class="t" style="left:87.8px;top:389px;line-height:17px;letter-spacing:-0.122px;">Check %Difference does not</span>
<div class="b" style="left:73.8px;top:416.2px;width:2.0px;height:2.0px;background:#555;"></div>
<div class="b" style="left:104.0px;top:407.1px;width:754.4px;height:20.0px;background:#efefef;"></div>
<span class="t" style="left:106.2px;top:409px;line-height:17px;letter-spacing:-0.004px;">Key Name</span>
<div class="b" style="left:73.8px;top:435.9px;width:2.0px;height:2.0px;background:#555;"></div>
<div class="b" style="left:104.0px;top:427.1px;width:754.4px;height:19.3px;background:#ffffc8;"></div>
<svg class="b" style="left:83.6px;top:427.6px;" width="18" height="18" viewBox="0 0 18 18"><path d="M0.6 8.6 L0.6 16.6 L8.6 16.6 L5.9 13.9 L9.3 10.5 L7.1 8.3 L3.5 11.7Z" fill="#5a5a5a"/><rect x="8.6" y="0.4" width="8.6" height="5.6" rx="1" fill="#fbb92c" stroke="#e8861c" stroke-width="0.9"/><rect x="13" y="1.8" width="2.6" height="1.6" fill="#fff3b0"/><path d="M10.7 6.2 L14.6 6.2 L14.6 14.8 L12.6 17.4 L10.7 14.8Z" fill="#eaf3fb" stroke="#2c74b8" stroke-width="1.1"/><line x1="12.7" y1="7" x2="12.7" y2="15" stroke="#2c74b8" stroke-width="0.9" stroke-dasharray="1.2 0.9"/></svg>
<span class="t" style="left:106.2px;top:429px;line-height:17px;letter-spacing:0.320px;">Wage Type</span>
<!-- rule 0005 -->
<svg class="b" style="left:37.6px;top:459.2px" width="1" height="1"><polyline points="-3.2,-1.65 0,1.65 3.2,-1.65" fill="none" stroke="#4a4a4a" stroke-width="1.9" stroke-linejoin="miter"/></svg>
<svg class="b" style="left:47.1px;top:453.3px;" width="19" height="16" viewBox="0 0 19 16"><rect x="6.6" y="0" width="5.8" height="3.4" rx="0.8" fill="#ececec" stroke="#777" stroke-width="1"/><path d="M6.8 3.6 C3 5.4 2.8 11.4 6 14 Q9.5 16.2 13 14 C16.2 11.4 16 5.4 12.2 3.6Z" fill="#fafafa" stroke="#777" stroke-width="1.1"/></svg>
<span class="t" style="left:69.3px;top:453px;line-height:17px;letter-spacing:-0.344px;">0005</span>
<span class="t" style="left:107.2px;top:453px;line-height:17px;">-</span>
<div class="b" style="left:115.1px;top:449.0px;width:33.4px;height:24.0px;background:#e4e4e4;border:1px solid;border-color:#a6a6a6 #b4b4b4 #a9a9a9 #bdbdbd;box-shadow:inset 0 1px 0 #f4f4f4;"></div>
<div class="b" style="left:152.3px;top:449.0px;width:33.4px;height:24.0px;background:#e4e4e4;border:1px solid;border-color:#a6a6a6 #b4b4b4 #a9a9a9 #bdbdbd;box-shadow:inset 0 1px 0 #f4f4f4;"></div>
<div class="b" style="left:189.3px;top:449.0px;width:33.4px;height:24.0px;background:#e4e4e4;border:1px solid #6aa5d8;box-shadow:inset 0 0 0 1px #d3e6f6;"></div>
<div class="b" style="left:226.7px;top:449.0px;width:33.4px;height:24.0px;background:#e4e4e4;border:1px solid;border-color:#a6a6a6 #b4b4b4 #a9a9a9 #bdbdbd;box-shadow:inset 0 1px 0 #f4f4f4;"></div>
<svg class="b" style="left:122.5px;top:452.1px;" width="18" height="17" viewBox="0 0 18 17"><circle cx="3.8" cy="4.5" r="3.9" fill="#6fb82f" stroke="#57a326" stroke-width="0.6"/><circle cx="12.8" cy="11.3" r="3.9" fill="#ea641e" stroke="#dc3f1c" stroke-width="0.8"/><circle cx="12.4" cy="10.6" r="1.5" fill="#f28a3a"/><path d="M10.6 14.4 H15 V15.6 H10.6Z" fill="#dc3f1c"/><path d="M8.8 1.2 L11.6 1.2 Q14 1.2 14 3.6 L14 5.2" fill="none" stroke="#555" stroke-width="1.3"/><path d="M12.4 3.8 H15.6" stroke="#555" stroke-width="1.1"/><path d="M7.6 15 L4.8 15 Q2.4 15 2.4 12.6 L2.4 11" fill="none" stroke="#555" stroke-width="1.3"/><path d="M0.8 12.4 H4" stroke="#555" stroke-width="1.1"/></svg>
<svg class="b" style="left:159.6px;top:452.2px;" width="18" height="17" viewBox="0 0 18 17"><rect x="0.9" y="1.2" width="9" height="11" fill="#fbfbfb"/><path d="M0.9 12.6 L0.9 1 L10 1" fill="none" stroke="#6a6a6a" stroke-width="1.4"/><path d="M0.9 12.2 L6 12.2" stroke="#8a8a8a" stroke-width="1.2"/><rect x="6.9" y="3.7" width="9.2" height="10.8" fill="#f1f1f1" stroke="#c2341f" stroke-width="1.9"/></svg>
<svg class="b" style="left:197.0px;top:451.6px;" width="17.0" height="17.0" viewBox="0 0 17 17"><g transform="rotate(46 8.5 8.5)"><path d="M5.9 -0.8 Q5.9 -2.2 7.1 -2.2 L9.9 -2.2 Q11.1 -2.2 11.1 -0.8 L11.1 0.6 L5.9 0.6Z" fill="#5b9ad2" stroke="#2368ab" stroke-width="0.9"/><rect x="5.6" y="0.6" width="5.8" height="1.5" fill="#1d5e9e"/><rect x="5.9" y="2.1" width="5.2" height="11.4" fill="#8dbae3" stroke="#2a72b5" stroke-width="0.9"/><rect x="7.4" y="2.4" width="2.2" height="10.8" fill="#b9d6ef"/><circle cx="5.9" cy="5.6" r="1.1" fill="#1d5e9e"/><rect x="5.6" y="13.2" width="5.8" height="1.1" fill="#e6f0fa"/><path d="M5.6 14.3 L11.4 14.3 L8.5 19.8Z" fill="#2f7cc0"/><path d="M6.6 14.6 L10.4 14.6 L9.6 16.6 L7.4 16.6Z" fill="#7fb0de"/></g></svg>
<svg class="b" style="left:233.8px;top:451.4px;" width="18" height="17" viewBox="0 0 18 17"><path d="M5 2.8 Q5.6 0.5 9 0.5 Q12.4 0.5 13 2.8Z" fill="#8dbae3" stroke="#1a66ae" stroke-width="1.1"/><rect x="0.4" y="2.7" width="17.2" height="2.5" rx="1" fill="#2f7cc0" stroke="#1a66ae" stroke-width="0.6"/><path d="M2.4 5.6 L15.6 5.6 L15 15.2 Q14.9 16.6 13.4 16.6 L4.6 16.6 Q3.1 16.6 3 15.2Z" fill="#86b5e0" stroke="#1a66ae" stroke-width="1.6"/><rect x="4.4" y="6.4" width="1.5" height="9.2" fill="#b9d6ef"/><rect x="12.2" y="6.4" width="1.5" height="9.2" fill="#b9d6ef"/><rect x="6.6" y="7" width="1.6" height="8.4" fill="#2f7cc0"/><rect x="10.2" y="7" width="1.6" height="8.4" fill="#2f7cc0"/><rect x="8.2" y="7" width="2" height="8" fill="#fff"/></svg>
<svg class="b" style="left:55.8px;top:482.4px" width="1" height="1"><polyline points="-3.2,-1.65 0,1.65 3.2,-1.65" fill="none" stroke="#4a4a4a" stroke-width="1.9" stroke-linejoin="miter"/></svg>
<svg class="b" style="left:66.2px;top:475.2px;" width="18" height="16" viewBox="0 0 18 16"><path d="M3.2 1.4 Q3.2 0.2 5 0.2 L16 0.2 Q17.8 0.2 17.6 2 L17.4 3.6 L14.6 3.6 L14.8 12 Q14.9 15.6 11.4 15.6 L1.4 15.6 Q0 15.6 0.2 14.2 L0.4 12.6 L4 12.6 L3.6 5 Q3.2 2.6 3.2 1.4Z" fill="#fdbc1e" stroke="#ef7d1a" stroke-width="0.9"/><path d="M0.4 13.4 L11.6 13.4 L11.6 15.4 L1.4 15.4 Q0.2 15.4 0.4 13.4Z" fill="#f4871c"/><path d="M14.8 0.6 Q17.4 0.4 17.2 2.2 L17 3.3 L14.9 3.3Z" fill="#f4871c"/></svg>
<span class="t" style="left:87.8px;top:476px;line-height:17px;letter-spacing:-0.122px;">Check %Difference does not</span>
<div class="b" style="left:73.8px;top:503.2px;width:2.0px;height:2.0px;background:#555;"></div>
<div class="b" style="left:104.0px;top:494.1px;width:754.4px;height:20.0px;background:#efefef;"></div>
<span class="t" style="left:106.2px;top:496px;line-height:17px;letter-spacing:-0.004px;">Key Name</span>
<div class="b" style="left:73.8px;top:522.9px;width:2.0px;height:2.0px;background:#555;"></div>
<div class="b" style="left:104.0px;top:514.1px;width:754.4px;height:19.3px;background:#ffffc8;"></div>
<svg class="b" style="left:83.6px;top:514.6px;" width="18" height="18" viewBox="0 0 18 18"><path d="M0.6 8.6 L0.6 16.6 L8.6 16.6 L5.9 13.9 L9.3 10.5 L7.1 8.3 L3.5 11.7Z" fill="#5a5a5a"/><rect x="8.6" y="0.4" width="8.6" height="5.6" rx="1" fill="#fbb92c" stroke="#e8861c" stroke-width="0.9"/><rect x="13" y="1.8" width="2.6" height="1.6" fill="#fff3b0"/><path d="M10.7 6.2 L14.6 6.2 L14.6 14.8 L12.6 17.4 L10.7 14.8Z" fill="#eaf3fb" stroke="#2c74b8" stroke-width="1.1"/><line x1="12.7" y1="7" x2="12.7" y2="15" stroke="#2c74b8" stroke-width="0.9" stroke-dasharray="1.2 0.9"/></svg>
<span class="t" style="left:106.2px;top:516px;line-height:17px;letter-spacing:0.320px;">Wage Type</span>
<!-- right panel : Rule Network -->
<div class="b" style="left:862.8px;top:74.4px;width:389.4px;height:754.0px;background:#f2f2f2;"></div>
<div class="b" style="left:866.6px;top:108.4px;width:385.6px;height:43.0px;background:#e6e6e6;"></div>
<div class="b" style="left:866.6px;top:105.8px;width:385.6px;height:2.7px;background:#007cc0;"></div>
<div class="b" style="left:876.5px;top:85.1px;width:109.6px;height:21.5px;background:#007cc0;"></div>
<span class="t" style="left:888.4px;top:88px;line-height:17px;color:#fff;letter-spacing:-0.166px;">Rule Network</span>
<div class="b" style="left:866.6px;top:129.0px;width:385.6px;height:1.2px;background:#6e6e6e;"></div>
<div class="b" style="left:866.6px;top:151.0px;width:385.6px;height:4.0px;background:#c9c9c9;"></div>
<div class="b" style="left:866.6px;top:155.0px;width:385.6px;height:1.3px;background:#7a7a7a;"></div>
<div class="b" style="left:866.6px;top:156.3px;width:385.6px;height:672.0px;background:#fff;"></div>
<!-- dialog: Change Rule -->
<div class="b" style="left:255.3px;top:128.2px;width:888.9px;height:449.6px;background:#f2f2f2;border-left:1px solid #c4c4c4;border-bottom:1.2px solid #c0c0c0;border-right:1.2px solid #8c8c8c;"></div>
<div class="b" style="left:255.3px;top:128.2px;width:888.5px;height:16.4px;background:#b2b2b2;"></div>
<div class="b" style="left:255.3px;top:144.6px;width:888.5px;height:11.2px;background:#a7a7a7;"></div>
<svg class="b" style="left:261.5px;top:134.4px;" width="16" height="13" viewBox="0 0 16 13"><path d="M0.8 0.8 H11 V3 H15.2 L12.2 7 H11 V12 H0.8Z" fill="none" stroke="#bdbdbd" stroke-width="1.5"/><path d="M5 3.4 H15 L12 7.2 H5Z" fill="#bdbdbd"/></svg>
<span class="t" style="left:282.2px;top:133px;line-height:17px;color:#949494;letter-spacing:-0.481px;">Change Rule</span>
<!-- wizard picture 1 -->
<div class="b" style="left:293.1px;top:194.3px;width:103.1px;height:280.8px;background:#8fafc8;border-left:2px solid #7a8893;border-top:1px solid #77858f;border-right:1px solid #c9d6df;border-bottom:1px solid #c9d6df;overflow:hidden;"><div class="b" style="left:0;top:-1.2px;width:103px;height:282px"><div class="b" style="left:7.2px;top:27.5px;width:40.8px;height:9.0px;background:linear-gradient(#f4eedc,#d9d0b4);border-right:1px solid #b8b09a;"></div><div class="b" style="left:48.0px;top:27.5px;width:42.0px;height:9.0px;background:linear-gradient(#f4eedc,#d9d0b4);"></div><div class="b" style="left:7.2px;top:36.5px;width:40.8px;height:10.3px;background:#d4ebfb;border-bottom:1px solid #a9c4d8;border-right:1px solid #9ab4c8;"></div><div class="b" style="left:48.0px;top:36.5px;width:42.0px;height:10.3px;background:#d4ebfb;border-bottom:1px solid #a9c4d8;"></div><span class="t" style="left:8.6px;top:38px;line-height:9px;font-size:6.6px;color:#222;">WPBP</span><span class="t" style="left:50.0px;top:38px;line-height:9px;font-size:6.6px;color:#333;">Work Center</span><div class="b" style="left:7.2px;top:46.9px;width:40.8px;height:10.3px;background:#d4ebfb;border-bottom:1px solid #a9c4d8;border-right:1px solid #9ab4c8;"></div><div class="b" style="left:48.0px;top:46.9px;width:42.0px;height:10.3px;background:#d4ebfb;border-bottom:1px solid #a9c4d8;"></div><span class="t" style="left:8.6px;top:48px;line-height:9px;font-size:6.6px;color:#222;">RT</span><span class="t" style="left:50.0px;top:48px;line-height:9px;font-size:6.6px;color:#333;">Results Table</span><div class="b" style="left:7.2px;top:57.2px;width:40.8px;height:10.3px;background:#d4ebfb;border-bottom:1px solid #a9c4d8;border-right:1px solid #9ab4c8;"></div><div class="b" style="left:48.0px;top:57.2px;width:42.0px;height:10.3px;background:#d4ebfb;border-bottom:1px solid #a9c4d8;"></div><span class="t" style="left:8.6px;top:58px;line-height:9px;font-size:6.6px;color:#222;">RT_</span><span class="t" style="left:50.0px;top:58px;line-height:9px;font-size:6.6px;color:#333;">Results Tab</span><div class="b" style="left:7.2px;top:67.5px;width:40.8px;height:10.3px;background:#d4ebfb;border-bottom:1px solid #a9c4d8;border-right:1px solid #9ab4c8;"></div><div class="b" style="left:48.0px;top:67.5px;width:42.0px;height:10.3px;background:#d4ebfb;border-bottom:1px solid #a9c4d8;"></div><span class="t" style="left:8.6px;top:69px;line-height:9px;font-size:6.6px;color:#222;">CRT</span><span class="t" style="left:50.0px;top:69px;line-height:9px;font-size:6.6px;color:#333;">Cumulation</span><div class="b" style="left:7.2px;top:77.9px;width:40.8px;height:10.3px;background:#d4ebfb;border-bottom:1px solid #a9c4d8;border-right:1px solid #9ab4c8;"></div><div class="b" style="left:48.0px;top:77.9px;width:42.0px;height:10.3px;background:#d4ebfb;border-bottom:1px solid #a9c4d8;"></div><span class="t" style="left:8.6px;top:79px;line-height:9px;font-size:6.6px;color:#222;">V0</span><span class="t" style="left:50.0px;top:79px;line-height:9px;font-size:6.6px;color:#333;">Variable</span><span class="t" style="left:8.6px;top:28px;line-height:9px;font-size:6.6px;color:#222;">Name</span><span class="t" style="left:50.0px;top:28px;line-height:9px;font-size:6.6px;color:#222;">Name</span><div class="b" style="left:60.0px;top:26.0px;width:43.0px;height:66.0px;background:linear-gradient(90deg,rgba(143,175,200,0),rgba(143,175,200,1) 70%);"></div><div class="b" style="left:6.0px;top:72.0px;width:97.0px;height:20.0px;background:linear-gradient(180deg,rgba(143,175,200,0),rgba(143,175,200,1) 75%);"></div><svg class="b" style="left:0.0px;top:0.0px;" width="103" height="280" viewBox="0 0 103 280"><rect x="5.6" y="47.3" width="21.4" height="10.4" fill="none" stroke="#c0392b" stroke-width="1.2" stroke-dasharray="1.4 1.2"/><path d="M27 58 C33 72 36 100 36.2 124" fill="none" stroke="#c8402f" stroke-width="1.3" stroke-dasharray="1.6 1.4"/><path d="M32.6 122 L36.2 131 L39.6 122 L36.2 125Z" fill="#d8351f"/></svg><div class="b" style="left:11.0px;top:131.2px;width:78.6px;height:6.6px;background:#69bdf2;"></div><span class="t" style="left:13.4px;top:132px;line-height:8px;font-family:'Liberation Mono',monospace;font-size:5.1px;color:#1a2a6a;">Table RT - Results Table</span><div class="b" style="left:11.0px;top:140.6px;width:78.6px;height:126.0px;background:#cfe8f6;border:1px solid #8a8a8a;border-top:1.6px solid #d8cfa8;"></div><div class="b" style="left:12.0px;top:142.2px;width:76.6px;height:18.0px;background:#a9dcfa;"></div><div class="b" style="left:12.0px;top:160.2px;width:76.6px;height:1.4px;background:#e8dfba;"></div><span class="t" style="left:13.6px;top:143px;line-height:8px;font-family:'Liberation Mono',monospace;font-size:5.3px;color:#1a2a6a;">PCR1Gr Wage CA  BT Abs.</span><span class="t" style="left:13.6px;top:150px;line-height:8px;font-family:'Liberation Mono',monospace;font-size:5.3px;color:#1a2a6a;">VarAssign  Amount</span><div class="b" style="left:12.0px;top:162.0px;width:76.6px;height:13.1px;background:#cde8f3;"></div><span class="t" style="left:13.4px;top:163px;line-height:8px;font-family:'Liberation Mono',monospace;font-size:5.3px;color:#555;">*</span><span class="t" style="left:34.6px;top:163px;line-height:8px;font-family:'Liberation Mono',monospace;font-size:5.3px;color:#555;">/101</span><span class="t" style="left:52.0px;top:169px;line-height:8px;font-family:'Liberation Mono',monospace;font-size:5.3px;color:#555;">383,85</span><div class="b" style="left:12.0px;top:175.1px;width:76.6px;height:13.1px;background:#e9f1f9;"></div><span class="t" style="left:13.4px;top:176px;line-height:8px;font-family:'Liberation Mono',monospace;font-size:5.3px;color:#555;">*</span><span class="t" style="left:34.6px;top:176px;line-height:8px;font-family:'Liberation Mono',monospace;font-size:5.3px;color:#555;">/102</span><span class="t" style="left:52.0px;top:182px;line-height:8px;font-family:'Liberation Mono',monospace;font-size:5.3px;color:#555;">383,85</span><div class="b" style="left:12.0px;top:188.1px;width:76.6px;height:13.1px;background:#cde8f3;"></div><span class="t" style="left:13.4px;top:189px;line-height:8px;font-family:'Liberation Mono',monospace;font-size:5.3px;color:#555;">*</span><span class="t" style="left:34.6px;top:189px;line-height:8px;font-family:'Liberation Mono',monospace;font-size:5.3px;color:#555;">/114</span><span class="t" style="left:52.0px;top:196px;line-height:8px;font-family:'Liberation Mono',monospace;font-size:5.3px;color:#555;">383,85</span><div class="b" style="left:12.0px;top:201.2px;width:76.6px;height:13.1px;background:#e9f1f9;"></div><span class="t" style="left:13.4px;top:202px;line-height:8px;font-family:'Liberation Mono',monospace;font-size:5.3px;color:#555;">*</span><span class="t" style="left:34.6px;top:202px;line-height:8px;font-family:'Liberation Mono',monospace;font-size:5.3px;color:#555;">/301</span><span class="t" style="left:52.0px;top:209px;line-height:8px;font-family:'Liberation Mono',monospace;font-size:5.3px;color:#555;">383,85</span><div class="b" style="left:12.0px;top:214.3px;width:76.6px;height:13.1px;background:#cde8f3;"></div><span class="t" style="left:13.4px;top:215px;line-height:8px;font-family:'Liberation Mono',monospace;font-size:5.3px;color:#555;">*</span><span class="t" style="left:34.6px;top:215px;line-height:8px;font-family:'Liberation Mono',monospace;font-size:5.3px;color:#555;">/301</span><span class="t" style="left:52.0px;top:222px;line-height:8px;font-family:'Liberation Mono',monospace;font-size:5.3px;color:#555;">383,85</span><div class="b" style="left:12.0px;top:227.3px;width:76.6px;height:13.1px;background:#e9f1f9;"></div><span class="t" style="left:13.4px;top:228px;line-height:8px;font-family:'Liberation Mono',monospace;font-size:5.3px;color:#555;">*</span><span class="t" style="left:34.6px;top:228px;line-height:8px;font-family:'Liberation Mono',monospace;font-size:5.3px;color:#555;">/303</span><span class="t" style="left:52.0px;top:235px;line-height:8px;font-family:'Liberation Mono',monospace;font-size:5.3px;color:#555;">383,85</span><div class="b" style="left:12.0px;top:240.4px;width:76.6px;height:13.1px;background:#cde8f3;"></div><span class="t" style="left:13.4px;top:241px;line-height:8px;font-family:'Liberation Mono',monospace;font-size:5.3px;color:#555;">*</span><span class="t" style="left:34.6px;top:241px;line-height:8px;font-family:'Liberation Mono',monospace;font-size:5.3px;color:#555;">/304</span><span class="t" style="left:52.0px;top:248px;line-height:8px;font-family:'Liberation Mono',monospace;font-size:5.3px;color:#555;">383,85</span><div class="b" style="left:12.0px;top:253.5px;width:76.6px;height:13.1px;background:#e9f1f9;"></div><span class="t" style="left:13.4px;top:254px;line-height:8px;font-family:'Liberation Mono',monospace;font-size:5.3px;color:#555;">*</span><span class="t" style="left:34.6px;top:254px;line-height:8px;font-family:'Liberation Mono',monospace;font-size:5.3px;color:#555;">/305</span><span class="t" style="left:52.0px;top:261px;line-height:8px;font-family:'Liberation Mono',monospace;font-size:5.3px;color:#555;">383,85</span><div class="b" style="left:10.0px;top:252.0px;width:81.0px;height:16.0px;background:linear-gradient(180deg,rgba(143,175,200,0),rgba(143,175,200,1) 92%);"></div></div></div>
<div class="b" style="left:432.6px;top:165.8px;width:689.8px;height:125.6px;background:#fff;border:1px solid #ececec;"></div>
<span class="t" style="left:441.2px;top:167px;line-height:17px;letter-spacing:-0.320px;">Rule Header</span>
<div class="b" style="left:435.2px;top:183.4px;width:684.2px;height:2.0px;background:#007cc0;"></div>
<span class="t" style="left:452.6px;top:190px;line-height:17px;letter-spacing:-0.094px;">This wizard will guide you through all the steps to maintain a rule</span>
<div class="b" style="left:451.4px;top:220.8px;width:570.2px;height:1.1px;background:#4a4a4a;"></div>
<span class="t" style="left:452.4px;top:236px;line-height:17px;letter-spacing:-0.332px;">Rule No:</span>
<div class="b" style="left:668.4px;top:233.5px;width:44.2px;height:20.0px;background:#e9edf0;border:1px solid #c6cacd;"></div>
<span class="t" style="left:672.8px;top:237px;line-height:17px;font-family:'Liberation Mono',monospace;font-size:13.6px;color:#222;letter-spacing:0.45px;">0005</span>
<span class="t" style="left:452.4px;top:258px;line-height:17px;letter-spacing:-0.312px;">Rule Description:</span>
<div class="b" style="left:668.4px;top:256.3px;width:444.2px;height:20.0px;background:#e9edf0;border:1px solid #c6cacd;"></div>
<span class="t" style="left:672.8px;top:258px;line-height:17px;letter-spacing:-0.030px;">Compare /559 to % of combined additional income value</span>
<div class="b" style="left:432.6px;top:301.8px;width:689.8px;height:200.0px;background:#fff;border:1px solid #ececec;"></div>
<span class="t" style="left:441.2px;top:303px;line-height:17px;letter-spacing:0.083px;">Data to Compare:</span>
<div class="b" style="left:435.2px;top:319.4px;width:684.2px;height:2.0px;background:#007cc0;"></div>
<span class="t" style="left:452.4px;top:327px;line-height:17px;letter-spacing:0.087px;">Table to Compare:</span>
<div class="b" style="left:668.4px;top:324.6px;width:444.2px;height:20.0px;background:#e9edf0;border:1px solid #c6cacd;"></div>
<span class="t" style="left:672.8px;top:327px;line-height:17px;letter-spacing:-0.037px;">RT Results Table</span>
<svg class="b" style="left:1103.2px;top:334.4px" width="1" height="1"><polyline points="-3.6,-1.8 0,1.8 3.6,-1.8" fill="none" stroke="#484848" stroke-width="2.2" stroke-linejoin="miter"/></svg>
<span class="t" style="left:452.4px;top:349px;line-height:17px;letter-spacing:-0.032px;">Which fields do you want to compare?</span>
<span class="t" style="left:470.8px;top:372px;line-height:17px;letter-spacing:0.008px;">Test Field:</span>
<div class="b" style="left:468.3px;top:390.0px;width:200.1px;height:1.0px;background:#d2d2d2;"></div>
<div class="b" style="left:668.4px;top:369.6px;width:262.2px;height:20.0px;background:#e9edf0;border:1px solid #c6cacd;"></div>
<span class="t" style="left:672.8px;top:372px;line-height:17px;letter-spacing:-0.244px;">ZFUNCTION User Function</span>
<svg class="b" style="left:921.2px;top:379.4px" width="1" height="1"><polyline points="-3.6,-1.8 0,1.8 3.6,-1.8" fill="none" stroke="#484848" stroke-width="2.2" stroke-linejoin="miter"/></svg>
<span class="t" style="left:488.8px;top:394px;line-height:17px;letter-spacing:-0.241px;">Function:</span>
<div class="b" style="left:486.9px;top:412.0px;width:181.5px;height:1.0px;background:#d2d2d2;"></div>
<div class="b" style="left:668.4px;top:392.3px;width:362.6px;height:20.0px;background:#e9edf0;border:1px solid #c6cacd;"></div>
<span class="t" style="left:672.8px;top:394px;line-height:17px;letter-spacing:0.009px;">F000005 Combined value WT: MA10, MA20, MA30, MA</span>
<svg class="b" style="left:1021.6px;top:402.1px" width="1" height="1"><polyline points="-3.6,-1.8 0,1.8 3.6,-1.8" fill="none" stroke="#484848" stroke-width="2.2" stroke-linejoin="miter"/></svg>
<span class="t" style="left:1007.0px;top:398px;line-height:12px;font-size:9px;letter-spacing:0.3px;">..</span>
<span class="t" style="left:470.8px;top:417px;line-height:17px;letter-spacing:-0.399px;">Control Field:</span>
<div class="b" style="left:468.3px;top:435.0px;width:200.1px;height:1.0px;background:#d2d2d2;"></div>
<div class="b" style="left:668.4px;top:415.3px;width:262.2px;height:20.0px;background:#e9edf0;border:1px solid #c6cacd;"></div>
<span class="t" style="left:672.8px;top:417px;line-height:17px;letter-spacing:-0.259px;">BETRG HR Payroll: Amount</span>
<svg class="b" style="left:921.2px;top:425.1px" width="1" height="1"><polyline points="-3.6,-1.8 0,1.8 3.6,-1.8" fill="none" stroke="#484848" stroke-width="2.2" stroke-linejoin="miter"/></svg>
<span class="t" style="left:452.4px;top:462px;line-height:17px;letter-spacing:-0.041px;">Value to Compare:</span>
<div class="b" style="left:450.5px;top:480.0px;width:217.9px;height:1.0px;background:#d2d2d2;"></div>
<div class="b" style="left:668.4px;top:460.4px;width:370.9px;height:20.0px;background:#e9edf0;border:1px solid #c6cacd;"></div>
<span class="t" style="left:672.8px;top:462px;line-height:17px;letter-spacing:-0.217px;">APD Percentage Difference</span>
<svg class="b" style="left:1029.9px;top:470.2px" width="1" height="1"><polyline points="-3.6,-1.8 0,1.8 3.6,-1.8" fill="none" stroke="#484848" stroke-width="2.2" stroke-linejoin="miter"/></svg>
<div class="b" style="left:1032.3px;top:391.2px;width:25.8px;height:22.8px;background:#e4e4e4;border:1px solid;border-color:#a6a6a6 #b4b4b4 #a9a9a9 #bdbdbd;box-shadow:inset 0 1px 0 #f4f4f4;"></div>
<div class="b" style="left:1059.5px;top:391.2px;width:25.8px;height:22.8px;background:#e4e4e4;border:1px solid;border-color:#a6a6a6 #b4b4b4 #a9a9a9 #bdbdbd;box-shadow:inset 0 1px 0 #f4f4f4;"></div>
<div class="b" style="left:1086.8px;top:391.2px;width:25.8px;height:22.8px;background:#e4e4e4;border:1px solid;border-color:#a6a6a6 #b4b4b4 #a9a9a9 #bdbdbd;box-shadow:inset 0 1px 0 #f4f4f4;"></div>
<svg class="b" style="left:1039.0px;top:394.2px;" width="12.4" height="16" viewBox="0 0 12.4 16"><path d="M0.7 0.7 L7.4 0.7 L11.700000000000001 5 L11.700000000000001 15.3 L0.7 15.3Z" fill="#fff" stroke="#5c5c5c" stroke-width="1.4"/><path d="M0.9 0.7 L0.9 15.1 L11.700000000000001 15.1" fill="none" stroke="#4e4e4e" stroke-width="1.8"/><path d="M7.4 0.7 L7.4 5 L11.700000000000001 5Z" fill="#5a5a5a"/></svg>
<svg class="b" style="left:1063.6px;top:395.0px;" width="17" height="15" viewBox="0 0 17 15"><path d="M0.8 10.8 V0.8 H8.8" fill="none" stroke="#6e6e6e" stroke-width="1.4"/><path d="M0.8 10.8 H5" stroke="#6e6e6e" stroke-width="1.4"/><rect x="5.9" y="3.4" width="9.4" height="10.8" fill="#f3f3f3" stroke="#c7372b" stroke-width="1.6"/></svg>
<svg class="b" style="left:1091.4px;top:393.6px;" width="17.0" height="17.0" viewBox="0 0 17 17"><g transform="rotate(46 8.5 8.5)"><path d="M5.9 -0.8 Q5.9 -2.2 7.1 -2.2 L9.9 -2.2 Q11.1 -2.2 11.1 -0.8 L11.1 0.6 L5.9 0.6Z" fill="#5b9ad2" stroke="#2368ab" stroke-width="0.9"/><rect x="5.6" y="0.6" width="5.8" height="1.5" fill="#1d5e9e"/><rect x="5.9" y="2.1" width="5.2" height="11.4" fill="#8dbae3" stroke="#2a72b5" stroke-width="0.9"/><rect x="7.4" y="2.4" width="2.2" height="10.8" fill="#b9d6ef"/><circle cx="5.9" cy="5.6" r="1.1" fill="#1d5e9e"/><rect x="5.6" y="13.2" width="5.8" height="1.1" fill="#e6f0fa"/><path d="M5.6 14.3 L11.4 14.3 L8.5 19.8Z" fill="#2f7cc0"/><path d="M6.6 14.6 L10.4 14.6 L9.6 16.6 L7.4 16.6Z" fill="#7fb0de"/></g></svg>
<svg class="b" style="left:658.4px;top:388.4px;" width="72.6" height="25.4" viewBox="0 0 72.6 25.4"><rect x="1.25" y="1.25" width="70.1" height="22.9" fill="none" stroke="#e8413f" stroke-width="2.5"/></svg>
<svg class="b" style="left:663.2px;top:456.6px;" width="184.8" height="26.8" viewBox="0 0 184.8 26.8"><rect x="1.25" y="1.25" width="182.3" height="24.3" fill="none" stroke="#e8413f" stroke-width="2.5"/></svg>
<!-- dialog: Change Function -->
<div class="b" style="left:365.2px;top:486.4px;width:886.8px;height:367.0px;background:#f2f2f2;border-left:1.2px solid #5a5a5a;"></div>
<div class="b" style="left:365.2px;top:486.4px;width:886.8px;height:17.4px;background:#535353;"></div>
<div class="b" style="left:365.2px;top:503.8px;width:886.8px;height:10.5px;background:#3b3b3b;"></div>
<svg class="b" style="left:372.0px;top:493.6px;" width="17" height="13" viewBox="0 0 17 13"><path d="M0.9 0.9 H11.4 V3 H16 L12.8 7.2 H11.4 V12 H0.9Z" fill="none" stroke="#8e8e8e" stroke-width="1.8"/><path d="M4.6 3.2 H16 L12.8 7.4 H4.6Z" fill="#8e8e8e"/></svg>
<span class="t" style="left:392.7px;top:490px;line-height:17px;color:#c9c9c9;letter-spacing:-0.309px;">Change Function</span>
<svg class="b" style="left:1232.2px;top:493.2px;" width="12" height="12" viewBox="0 0 12 12"><path d="M1.2 1.2 L10.8 10.8 M10.8 1.2 L1.2 10.8" stroke="#8c8c8c" stroke-width="2.4" fill="none"/></svg>
<!-- wizard picture 2 -->
<div class="b" style="left:403.4px;top:553.4px;width:102.8px;height:279.4px;background:#8fb0c8;border-left:2px solid #7a8893;border-top:1px solid #77858f;border-right:1px solid #c9d6df;border-bottom:1px solid #c9d6df;overflow:hidden;"><div class="b" style="left:-1.5px;top:-0.9px;width:104px;height:281px"><div class="b" style="left:5.4px;top:124.6px;width:92.0px;height:15.4px;background:#ded6ca;"></div><div class="b" style="left:5.4px;top:140.0px;width:92.0px;height:16.0px;background:#e9e1d9;"></div><div class="b" style="left:5.4px;top:156.0px;width:92.0px;height:16.6px;background:#efebd6;"></div><div class="b" style="left:5.4px;top:172.6px;width:92.0px;height:54.0px;background:#f5f1e4;"></div><div class="b" style="left:5.4px;top:215.0px;width:92.0px;height:12.0px;background:linear-gradient(180deg,rgba(143,176,200,0),rgba(143,176,200,1) 90%);"></div><div class="b" style="left:72.0px;top:123.0px;width:31.0px;height:114.0px;background:linear-gradient(90deg,rgba(143,176,200,0),rgba(143,176,200,1) 68%);"></div><span class="t" style="left:33.6px;top:125px;line-height:14px;font-size:11.3px;color:#333;">00001</span><span class="t" style="left:71.4px;top:125px;line-height:14px;font-size:11.3px;color:#8b98a6;">Cor</span><span class="t" style="left:51.6px;top:141px;line-height:14px;font-size:11.3px;color:#333;">0001</span><span class="t" style="left:68.6px;top:157px;line-height:14px;font-size:11.3px;color:#555;">For</span><span class="t" style="left:51.6px;top:223px;line-height:14px;font-size:11.3px;color:#8a9cb0;">0002</span><svg class="b" style="left:0.0px;top:0.0px;" width="103" height="280" viewBox="0 0 103 280"><g fill="none" stroke-width="1"><rect x="2.5" y="37" width="97" height="35.8" stroke="#fff"/><rect x="2.5" y="37" width="97" height="35.8" stroke="#111" stroke-dasharray="3.6 2.4"/><path d="M2.5 73 L14.6 127" stroke="#fff"/><path d="M2.5 73 L14.6 127" stroke="#111" stroke-dasharray="3.6 2.4"/><path d="M99.5 73 L95 146" stroke="#fff"/><path d="M99.5 73 L95 146" stroke="#111" stroke-dasharray="3.6 2.4"/><rect x="18" y="139.4" width="76.8" height="32.4" stroke="#fff"/><rect x="18" y="139.4" width="76.8" height="32.4" stroke="#111" stroke-dasharray="3.6 2.4"/></g><path d="M29.2 41 V67 M53.2 41 V67" stroke="#8e2a8e" stroke-width="1.5"/><path d="M74.6 53.4 H97" stroke="#8e2a8e" stroke-width="1.4"/><g fill="#fff" stroke="#555" stroke-width="0.9"><path d="M7 126.6 H15 L11 132.4Z"/><path d="M20.4 143.6 H28.4 L24.4 149.4Z"/><path d="M34.4 159.6 H42.4 L38.4 165.4Z"/></g><path d="M20.4 226 H28.4 L24.4 231.8Z" fill="#c8d4de" stroke="#7f93a5" stroke-width="0.9"/><rect x="19.6" y="125.6" width="5.6" height="3" fill="#f7a823" stroke="#d9541c" stroke-width="0.7"/><path d="M22 129 V138 M22 132.4 H28 M22 137.4 H28" stroke="#333" stroke-width="0.9" fill="none"/><rect x="28" y="130.6" width="3.6" height="3.2" fill="#f7a823" stroke="#d9541c" stroke-width="0.7"/><rect x="28" y="135.8" width="3.6" height="3.2" fill="#f7a823" stroke="#d9541c" stroke-width="0.7"/><path d="M31.8 150 L39.2 141.4 L46.6 150 L44.8 150 L44.8 153.4 L33.6 153.4 L33.6 150Z" fill="#e9731c" stroke="#7a3a10" stroke-width="0.8"/><path d="M33.8 150.4 H38 V153.4 H33.8Z" fill="#222"/><path d="M39.2 141.4 L46.6 150 L42 152Z" fill="#c2410c"/><path d="M31.8 233 L39.2 224.4 L46.6 233 L44.8 233 L44.8 236.4 L33.6 236.4 L33.6 233Z" fill="#b7a89a" stroke="#8899a8" stroke-width="0.8"/><path d="M52.6 158.2 H63.4 Q65 158.2 64.6 160 L62.6 160 L62.8 168.4 H52 Q50.6 168.4 51 166.8 H53.6 L53.2 160 Q53 158.2 52.6 158.2Z" fill="#dfe8d4" stroke="#444" stroke-width="0.8"/><path d="M55 161 H61 M55 163 H61 M55 165 H60" stroke="#777" stroke-width="0.6"/><g stroke="#555" stroke-width="0.8" fill="none"><path d="M73 197.5 L68.4 202.1 M68.4 199.1 V202.1 H71.4"/><path d="M73 213.1 L68.4 217.7 M68.4 214.7 V217.7 H71.4"/></g><rect x="74.4" y="189.3" width="7.4" height="4.6" rx="1" fill="#e3c878" stroke="#8a7a4a" stroke-width="0.7"/><rect x="76.4" y="193.9" width="3.4" height="8.6" fill="#dfe8ee" stroke="#667788" stroke-width="0.7"/><rect x="74.4" y="205.1" width="7.4" height="4.6" rx="1" fill="#c8d8a8" stroke="#7f8f6a" stroke-width="0.7"/><rect x="76.4" y="209.7" width="3.4" height="8.6" fill="#dfe8ee" stroke="#778899" stroke-width="0.7"/></svg><span class="t" style="left:3.6px;top:45px;line-height:21px;font-family:'Liberation Serif',serif;font-size:17px;color:#111;font-style:italic;font-weight:bold;">y</span><span class="t" style="left:14.4px;top:45px;line-height:19px;font-size:15px;color:#111;font-weight:bold;">=</span><span class="t" style="left:32.2px;top:34px;line-height:36px;font-family:'Liberation Serif',serif;font-size:32px;color:#111;font-style:italic;-webkit-text-stroke:0.5px #111;">x</span><span class="t" style="left:57.2px;top:43px;line-height:23px;font-size:19px;color:#111;-webkit-text-stroke:0.4px #111;">+</span><span class="t" style="left:80.6px;top:35px;line-height:19px;font-family:'Liberation Serif',serif;font-size:16px;color:#111;font-style:italic;font-weight:bold;">x</span><span class="t" style="left:81.4px;top:51px;line-height:19px;font-family:'Liberation Serif',serif;font-size:16px;color:#111;font-style:italic;font-weight:bold;">y</span></div></div>
<div class="b" style="left:542.8px;top:524.6px;width:698.0px;height:238.4px;background:#fff;border:1px solid #ececec;"></div>
<span class="t" style="left:551.4px;top:526px;line-height:17px;letter-spacing:-0.289px;">Function Variables</span>
<div class="b" style="left:545.4px;top:542.2px;width:692.4px;height:2.0px;background:#007cc0;"></div>
<div class="b" style="left:568.4px;top:545.4px;width:666.3px;height:175.2px;background:#fff;border:1px solid #dedede;"></div>
<div class="b" style="left:570.0px;top:547.3px;width:626.0px;height:20.6px;background:#e4e4e4;"></div>
<div class="b" style="left:591.5px;top:547.3px;width:1.0px;height:20.6px;background:#cfcfcf;"></div>
<div class="b" style="left:633.9px;top:547.3px;width:1.0px;height:20.6px;background:#cfcfcf;"></div>
<div class="b" style="left:1011.8px;top:547.3px;width:1.0px;height:20.6px;background:#cfcfcf;"></div>
<div class="b" style="left:1181.1px;top:547.3px;width:1.0px;height:20.6px;background:#cfcfcf;"></div>
<span class="t" style="left:596.0px;top:550px;line-height:17px;letter-spacing:0.096px;">Name</span>
<span class="t" style="left:637.8px;top:550px;line-height:17px;letter-spacing:0.677px;">Type</span>
<span class="t" style="left:1016.4px;top:550px;line-height:17px;letter-spacing:-0.382px;">Value</span>
<span class="t" style="left:1184.4px;top:550px;line-height:17px;">N</span>
<div class="b" style="left:570.0px;top:567.9px;width:22.0px;height:22.6px;background:#e2e2e2;border-top:1px solid #d2d2d2;"></div>
<div class="b" style="left:592.0px;top:567.9px;width:589.6px;height:22.6px;background:#e9edf1;border-top:1px solid #d0d0d0;"></div>
<div class="b" style="left:1181.6px;top:567.9px;width:14.4px;height:22.6px;background:#e9edf1;border-top:1px solid #d0d0d0;"></div>
<div class="b" style="left:591.5px;top:567.9px;width:1.0px;height:22.6px;background:#cdcdcd;"></div>
<div class="b" style="left:633.9px;top:567.9px;width:1.0px;height:22.6px;background:#cdcdcd;"></div>
<div class="b" style="left:1011.8px;top:567.9px;width:1.0px;height:22.6px;background:#cdcdcd;"></div>
<div class="b" style="left:1181.1px;top:567.9px;width:1.0px;height:22.6px;background:#cdcdcd;"></div>
<span class="t" style="left:593.4px;top:570px;line-height:19px;font-family:'Liberation Mono',monospace;font-size:13.4px;color:#2e2e2e;letter-spacing:1.03px;">V01</span>
<span class="t" style="left:635.0px;top:570px;line-height:19px;font-family:'Liberation Mono',monospace;font-size:13.4px;color:#2e2e2e;letter-spacing:1.03px;">Table RT(LGART = MA10)</span>
<span class="t" style="left:1013.3px;top:570px;line-height:19px;font-family:'Liberation Mono',monospace;font-size:13.4px;color:#2e2e2e;letter-spacing:1.03px;">BETRG</span>
<div class="b" style="left:1182.6px;top:573.5px;width:12.6px;height:12.6px;background:#fff;border:1px solid #d0d0d0;"></div>
<svg class="b" style="left:1183.2px;top:572.5px;" width="13" height="14" viewBox="0 0 13 14"><path d="M1.2 7.2 L4.6 11.6 L11.6 0.8" fill="none" stroke="#1479c4" stroke-width="2"/></svg>
<div class="b" style="left:570.0px;top:589.7px;width:22.0px;height:22.6px;background:#e2e2e2;border-top:1px solid #d2d2d2;"></div>
<div class="b" style="left:592.0px;top:589.7px;width:589.6px;height:22.6px;background:#e9edf1;border-top:1px solid #d0d0d0;"></div>
<div class="b" style="left:1181.6px;top:589.7px;width:14.4px;height:22.6px;background:#e9edf1;border-top:1px solid #d0d0d0;"></div>
<div class="b" style="left:591.5px;top:589.7px;width:1.0px;height:22.6px;background:#cdcdcd;"></div>
<div class="b" style="left:633.9px;top:589.7px;width:1.0px;height:22.6px;background:#cdcdcd;"></div>
<div class="b" style="left:1011.8px;top:589.7px;width:1.0px;height:22.6px;background:#cdcdcd;"></div>
<div class="b" style="left:1181.1px;top:589.7px;width:1.0px;height:22.6px;background:#cdcdcd;"></div>
<span class="t" style="left:593.4px;top:592px;line-height:19px;font-family:'Liberation Mono',monospace;font-size:13.4px;color:#2e2e2e;letter-spacing:1.03px;">V02</span>
<span class="t" style="left:635.0px;top:592px;line-height:19px;font-family:'Liberation Mono',monospace;font-size:13.4px;color:#2e2e2e;letter-spacing:1.03px;">Table RT(LGART = MA20)</span>
<span class="t" style="left:1013.3px;top:592px;line-height:19px;font-family:'Liberation Mono',monospace;font-size:13.4px;color:#2e2e2e;letter-spacing:1.03px;">BETRG</span>
<div class="b" style="left:1182.6px;top:595.3px;width:12.6px;height:12.6px;background:#fff;border:1px solid #d0d0d0;"></div>
<svg class="b" style="left:1183.2px;top:594.3px;" width="13" height="14" viewBox="0 0 13 14"><path d="M1.2 7.2 L4.6 11.6 L11.6 0.8" fill="none" stroke="#1479c4" stroke-width="2"/></svg>
<div class="b" style="left:570.0px;top:611.5px;width:22.0px;height:22.6px;background:#e2e2e2;border-top:1px solid #d2d2d2;"></div>
<div class="b" style="left:592.0px;top:611.5px;width:589.6px;height:22.6px;background:#e9edf1;border-top:1px solid #d0d0d0;"></div>
<div class="b" style="left:1181.6px;top:611.5px;width:14.4px;height:22.6px;background:#e9edf1;border-top:1px solid #d0d0d0;"></div>
<div class="b" style="left:591.5px;top:611.5px;width:1.0px;height:22.6px;background:#cdcdcd;"></div>
<div class="b" style="left:633.9px;top:611.5px;width:1.0px;height:22.6px;background:#cdcdcd;"></div>
<div class="b" style="left:1011.8px;top:611.5px;width:1.0px;height:22.6px;background:#cdcdcd;"></div>
<div class="b" style="left:1181.1px;top:611.5px;width:1.0px;height:22.6px;background:#cdcdcd;"></div>
<span class="t" style="left:593.4px;top:614px;line-height:19px;font-family:'Liberation Mono',monospace;font-size:13.4px;color:#2e2e2e;letter-spacing:1.03px;">V03</span>
<span class="t" style="left:635.0px;top:614px;line-height:19px;font-family:'Liberation Mono',monospace;font-size:13.4px;color:#2e2e2e;letter-spacing:1.03px;">Table RT(LGART = MA30)</span>
<span class="t" style="left:1013.3px;top:614px;line-height:19px;font-family:'Liberation Mono',monospace;font-size:13.4px;color:#2e2e2e;letter-spacing:1.03px;">BETRG</span>
<div class="b" style="left:1182.6px;top:617.1px;width:12.6px;height:12.6px;background:#fff;border:1px solid #d0d0d0;"></div>
<svg class="b" style="left:1183.2px;top:616.1px;" width="13" height="14" viewBox="0 0 13 14"><path d="M1.2 7.2 L4.6 11.6 L11.6 0.8" fill="none" stroke="#1479c4" stroke-width="2"/></svg>
<div class="b" style="left:570.0px;top:633.3px;width:22.0px;height:22.6px;background:#e2e2e2;border-top:1px solid #d2d2d2;"></div>
<div class="b" style="left:592.0px;top:633.3px;width:589.6px;height:22.6px;background:#e9edf1;border-top:1px solid #d0d0d0;"></div>
<div class="b" style="left:1181.6px;top:633.3px;width:14.4px;height:22.6px;background:#e9edf1;border-top:1px solid #d0d0d0;"></div>
<div class="b" style="left:591.5px;top:633.3px;width:1.0px;height:22.6px;background:#cdcdcd;"></div>
<div class="b" style="left:633.9px;top:633.3px;width:1.0px;height:22.6px;background:#cdcdcd;"></div>
<div class="b" style="left:1011.8px;top:633.3px;width:1.0px;height:22.6px;background:#cdcdcd;"></div>
<div class="b" style="left:1181.1px;top:633.3px;width:1.0px;height:22.6px;background:#cdcdcd;"></div>
<span class="t" style="left:593.4px;top:636px;line-height:19px;font-family:'Liberation Mono',monospace;font-size:13.4px;color:#2e2e2e;letter-spacing:1.03px;">V04</span>
<span class="t" style="left:635.0px;top:636px;line-height:19px;font-family:'Liberation Mono',monospace;font-size:13.4px;color:#2e2e2e;letter-spacing:1.03px;">Table RT(LGART = MA90)</span>
<span class="t" style="left:1013.3px;top:636px;line-height:19px;font-family:'Liberation Mono',monospace;font-size:13.4px;color:#2e2e2e;letter-spacing:1.03px;">BETRG</span>
<div class="b" style="left:1182.6px;top:638.9px;width:12.6px;height:12.6px;background:#fff;border:1px solid #d0d0d0;"></div>
<svg class="b" style="left:1183.2px;top:637.9px;" width="13" height="14" viewBox="0 0 13 14"><path d="M1.2 7.2 L4.6 11.6 L11.6 0.8" fill="none" stroke="#1479c4" stroke-width="2"/></svg>
<div class="b" style="left:570.0px;top:655.1px;width:22.0px;height:22.6px;background:#e2e2e2;border-top:1px solid #d2d2d2;"></div>
<div class="b" style="left:592.0px;top:655.1px;width:589.6px;height:22.6px;background:#f3f3f3;border-top:1px solid #d0d0d0;"></div>
<div class="b" style="left:1181.6px;top:655.1px;width:14.4px;height:22.6px;background:#fff;border-top:1px solid #d0d0d0;"></div>
<div class="b" style="left:591.5px;top:655.1px;width:1.0px;height:22.6px;background:#cdcdcd;"></div>
<div class="b" style="left:633.9px;top:655.1px;width:1.0px;height:22.6px;background:#cdcdcd;"></div>
<div class="b" style="left:1011.8px;top:655.1px;width:1.0px;height:22.6px;background:#cdcdcd;"></div>
<div class="b" style="left:1181.1px;top:655.1px;width:1.0px;height:22.6px;background:#cdcdcd;"></div>
<div class="b" style="left:570.0px;top:676.9px;width:22.0px;height:20.3px;background:#e2e2e2;border-top:1px solid #d2d2d2;"></div>
<div class="b" style="left:592.0px;top:676.9px;width:589.6px;height:20.3px;background:#f3f3f3;border-top:1px solid #d0d0d0;"></div>
<div class="b" style="left:1181.6px;top:676.9px;width:14.4px;height:20.3px;background:#fff;border-top:1px solid #d0d0d0;"></div>
<div class="b" style="left:591.5px;top:676.9px;width:1.0px;height:20.3px;background:#cdcdcd;"></div>
<div class="b" style="left:633.9px;top:676.9px;width:1.0px;height:20.3px;background:#cdcdcd;"></div>
<div class="b" style="left:1011.8px;top:676.9px;width:1.0px;height:20.3px;background:#cdcdcd;"></div>
<div class="b" style="left:1181.1px;top:676.9px;width:1.0px;height:20.3px;background:#cdcdcd;"></div>
<div class="b" style="left:1195.5px;top:547.3px;width:1.0px;height:150.0px;background:#d8d8d8;"></div>
<div class="b" style="left:592.9px;top:571.4px;width:28.8px;height:16.0px;border:1px dotted #333;"></div>
<div class="b" style="left:1212.2px;top:547.3px;width:18.8px;height:20.6px;background:#e4e4e4;"></div>
<div class="b" style="left:1212.2px;top:568.9px;width:18.8px;height:88.4px;background:#f2f2f2;"></div>
<div class="b" style="left:1212.2px;top:658.0px;width:18.8px;height:19.0px;background:#f2f2f2;"></div>
<div class="b" style="left:1212.2px;top:678.0px;width:18.8px;height:19.0px;background:#f2f2f2;"></div>
<div class="b" style="left:1215.0px;top:570.4px;width:13.0px;height:16.8px;background:#b8c2ce;"></div>
<div class="b" style="left:1219.6px;top:575.6px;width:3.8px;height:1.3px;background:#fff;"></div><div class="b" style="left:1219.6px;top:578.2px;width:3.8px;height:1.3px;background:#fff;"></div><div class="b" style="left:1219.6px;top:580.8px;width:3.8px;height:1.3px;background:#fff;"></div>
<svg class="b" style="left:1221.2px;top:667.4px" width="1" height="1"><polyline points="-3.8,1.9 0,-1.9 3.8,1.9" fill="none" stroke="#4a4a4a" stroke-width="2.2" stroke-linejoin="miter"/></svg>
<svg class="b" style="left:1221.2px;top:687.6px" width="1" height="1"><polyline points="-3.8,-1.9 0,1.9 3.8,-1.9" fill="none" stroke="#4a4a4a" stroke-width="2.2" stroke-linejoin="miter"/></svg>
<div class="b" style="left:569.4px;top:698.8px;width:23.0px;height:19.2px;background:#fff;"></div>
<div class="b" style="left:593.4px;top:698.8px;width:18.0px;height:19.2px;background:#f4f4f4;"></div>
<div class="b" style="left:612.4px;top:698.8px;width:19.0px;height:19.2px;background:#f4f4f4;"></div>
<div class="b" style="left:632.4px;top:698.8px;width:537.8px;height:19.2px;background:#f2f2f2;"></div>
<div class="b" style="left:1171.1px;top:698.8px;width:18.8px;height:19.2px;background:#f4f4f4;"></div>
<div class="b" style="left:1190.8px;top:698.8px;width:19.3px;height:19.2px;background:#f4f4f4;"></div>
<svg class="b" style="left:603.2px;top:708.4px" width="1" height="1"><polyline points="1.9,-3.8 -1.9,0 1.9,3.8" fill="none" stroke="#4a4a4a" stroke-width="2.2" stroke-linejoin="miter"/></svg>
<svg class="b" style="left:623.4px;top:708.4px" width="1" height="1"><polyline points="-1.9,-3.8 1.9,0 -1.9,3.8" fill="none" stroke="#4a4a4a" stroke-width="2.2" stroke-linejoin="miter"/></svg>
<div class="b" style="left:634.6px;top:702.7px;width:130.1px;height:12.3px;background:#b8c2ce;"></div>
<div class="b" style="left:696.6px;top:707.4px;width:1.1px;height:3.0px;background:#fff;"></div><div class="b" style="left:698.6px;top:707.4px;width:1.1px;height:3.0px;background:#fff;"></div><div class="b" style="left:700.6px;top:707.4px;width:1.1px;height:3.0px;background:#fff;"></div>
<svg class="b" style="left:1180.0px;top:708.4px" width="1" height="1"><polyline points="1.9,-3.8 -1.9,0 1.9,3.8" fill="none" stroke="#4a4a4a" stroke-width="2.2" stroke-linejoin="miter"/></svg>
<svg class="b" style="left:1200.2px;top:708.4px" width="1" height="1"><polyline points="-1.9,-3.8 1.9,0 -1.9,3.8" fill="none" stroke="#4a4a4a" stroke-width="2.2" stroke-linejoin="miter"/></svg>
<div class="b" style="left:569.7px;top:727.3px;width:125.8px;height:22.0px;background:#e4e4e4;border:1px solid;border-color:#a6a6a6 #b4b4b4 #a9a9a9 #bdbdbd;box-shadow:inset 0 1px 0 #f4f4f4;"></div>
<svg class="b" style="left:574.1px;top:730.4px;" width="12" height="16.2" viewBox="0 0 12 16.2"><path d="M0.7 0.7 L7 0.7 L11.3 5 L11.3 15.5 L0.7 15.5Z" fill="#fff" stroke="#5c5c5c" stroke-width="1.4"/><path d="M0.9 0.7 L0.9 15.299999999999999 L11.3 15.299999999999999" fill="none" stroke="#4e4e4e" stroke-width="1.8"/><path d="M7 0.7 L7 5 L11.3 5Z" fill="#5a5a5a"/></svg>
<div class="b" style="left:706.2px;top:727.3px;width:125.8px;height:22.0px;background:#e4e4e4;border:1px solid;border-color:#a6a6a6 #b4b4b4 #a9a9a9 #bdbdbd;box-shadow:inset 0 1px 0 #f4f4f4;"></div>
<svg class="b" style="left:710.6px;top:730.4px;" width="12" height="16.2" viewBox="0 0 12 16.2"><path d="M0.7 0.7 L7 0.7 L11.3 5 L11.3 15.5 L0.7 15.5Z" fill="#fff" stroke="#5c5c5c" stroke-width="1.4"/><path d="M0.9 0.7 L0.9 15.299999999999999 L11.3 15.299999999999999" fill="none" stroke="#4e4e4e" stroke-width="1.8"/><path d="M7 0.7 L7 5 L11.3 5Z" fill="#5a5a5a"/></svg>
<div class="b" style="left:842.5px;top:727.3px;width:125.8px;height:22.0px;background:#e4e4e4;border:1px solid;border-color:#a6a6a6 #b4b4b4 #a9a9a9 #bdbdbd;box-shadow:inset 0 1px 0 #f4f4f4;"></div>
<svg class="b" style="left:846.9px;top:730.4px;" width="12" height="16.2" viewBox="0 0 12 16.2"><path d="M0.7 0.7 L7 0.7 L11.3 5 L11.3 15.5 L0.7 15.5Z" fill="#fff" stroke="#5c5c5c" stroke-width="1.4"/><path d="M0.9 0.7 L0.9 15.299999999999999 L11.3 15.299999999999999" fill="none" stroke="#4e4e4e" stroke-width="1.8"/><path d="M7 0.7 L7 5 L11.3 5Z" fill="#5a5a5a"/></svg>
<span class="t" style="left:617.2px;top:730px;line-height:17px;letter-spacing:-0.091px;">Constant</span>
<span class="t" style="left:755.4px;top:730px;line-height:17px;letter-spacing:-0.197px;">Function</span>
<span class="t" style="left:900.8px;top:730px;line-height:17px;letter-spacing:0.006px;">Table</span>
<div class="b" style="left:1160.3px;top:727.3px;width:35.1px;height:22.0px;background:#e4e4e4;border:1px solid;border-color:#a6a6a6 #b4b4b4 #a9a9a9 #bdbdbd;box-shadow:inset 0 1px 0 #f4f4f4;"></div>
<div class="b" style="left:1197.2px;top:727.3px;width:34.5px;height:22.0px;background:#e4e4e4;border:1px solid;border-color:#a6a6a6 #b4b4b4 #a9a9a9 #bdbdbd;box-shadow:inset 0 1px 0 #f4f4f4;"></div>
<svg class="b" style="left:1169.0px;top:729.6px;" width="17.0" height="17.0" viewBox="0 0 17 17"><g transform="rotate(46 8.5 8.5)"><path d="M5.9 -0.8 Q5.9 -2.2 7.1 -2.2 L9.9 -2.2 Q11.1 -2.2 11.1 -0.8 L11.1 0.6 L5.9 0.6Z" fill="#5b9ad2" stroke="#2368ab" stroke-width="0.9"/><rect x="5.6" y="0.6" width="5.8" height="1.5" fill="#1d5e9e"/><rect x="5.9" y="2.1" width="5.2" height="11.4" fill="#8dbae3" stroke="#2a72b5" stroke-width="0.9"/><rect x="7.4" y="2.4" width="2.2" height="10.8" fill="#b9d6ef"/><circle cx="5.9" cy="5.6" r="1.1" fill="#1d5e9e"/><rect x="5.6" y="13.2" width="5.8" height="1.1" fill="#e6f0fa"/><path d="M5.6 14.3 L11.4 14.3 L8.5 19.8Z" fill="#2f7cc0"/><path d="M6.6 14.6 L10.4 14.6 L9.6 16.6 L7.4 16.6Z" fill="#7fb0de"/></g></svg>
<svg class="b" style="left:1205.4px;top:729.8px;" width="18" height="17" viewBox="0 0 18 17"><path d="M5 2.8 Q5.6 0.5 9 0.5 Q12.4 0.5 13 2.8Z" fill="#8dbae3" stroke="#1a66ae" stroke-width="1.1"/><rect x="0.4" y="2.7" width="17.2" height="2.5" rx="1" fill="#2f7cc0" stroke="#1a66ae" stroke-width="0.6"/><path d="M2.4 5.6 L15.6 5.6 L15 15.2 Q14.9 16.6 13.4 16.6 L4.6 16.6 Q3.1 16.6 3 15.2Z" fill="#86b5e0" stroke="#1a66ae" stroke-width="1.6"/><rect x="4.4" y="6.4" width="1.5" height="9.2" fill="#b9d6ef"/><rect x="12.2" y="6.4" width="1.5" height="9.2" fill="#b9d6ef"/><rect x="6.6" y="7" width="1.6" height="8.4" fill="#2f7cc0"/><rect x="10.2" y="7" width="1.6" height="8.4" fill="#2f7cc0"/><rect x="8.2" y="7" width="2" height="8" fill="#fff"/></svg>
<div class="b" style="left:542.8px;top:773.5px;width:698.0px;height:90.0px;background:#fff;border:1px solid #ececec;"></div>
<span class="t" style="left:551.4px;top:774px;line-height:17px;letter-spacing:-0.309px;">Function Code</span>
<div class="b" style="left:545.4px;top:791.1px;width:692.4px;height:2.0px;background:#007cc0;"></div>
<div class="b" style="left:560.0px;top:796.4px;width:644.0px;height:70.0px;background:#fff;border:1px solid #8e8e8e;"></div>
<div class="b" style="left:561.6px;top:797.8px;width:641.0px;height:70.0px;background:#fff;border:1.4px solid #444;"></div>
<span class="t" style="left:570.8px;top:799px;line-height:19px;font-family:'Liberation Mono',monospace;font-size:13.4px;color:#2e2e2e;letter-spacing:1.03px;">C_RESULT = V01 + V02 + V03 - V04.</span>
<svg class="b" style="left:544.9px;top:793.2px;" width="368.9" height="27.8" viewBox="0 0 368.9 27.8"><rect x="1.25" y="1.25" width="366.4" height="25.3" fill="none" stroke="#e8413f" stroke-width="2.5"/></svg>
<div class="b" style="left:2.5px;top:852.6px;width:1251.5px;height:2.4px;background:#d2d2d2;"></div>
<div class="b" style="left:0.0px;top:855.0px;width:1256.0px;height:1.0px;background:#fff;"></div>
<div class="b" style="left:1252.0px;top:1.0px;width:2.0px;height:852.0px;background:#d4d4d4;"></div>
</body></html>
